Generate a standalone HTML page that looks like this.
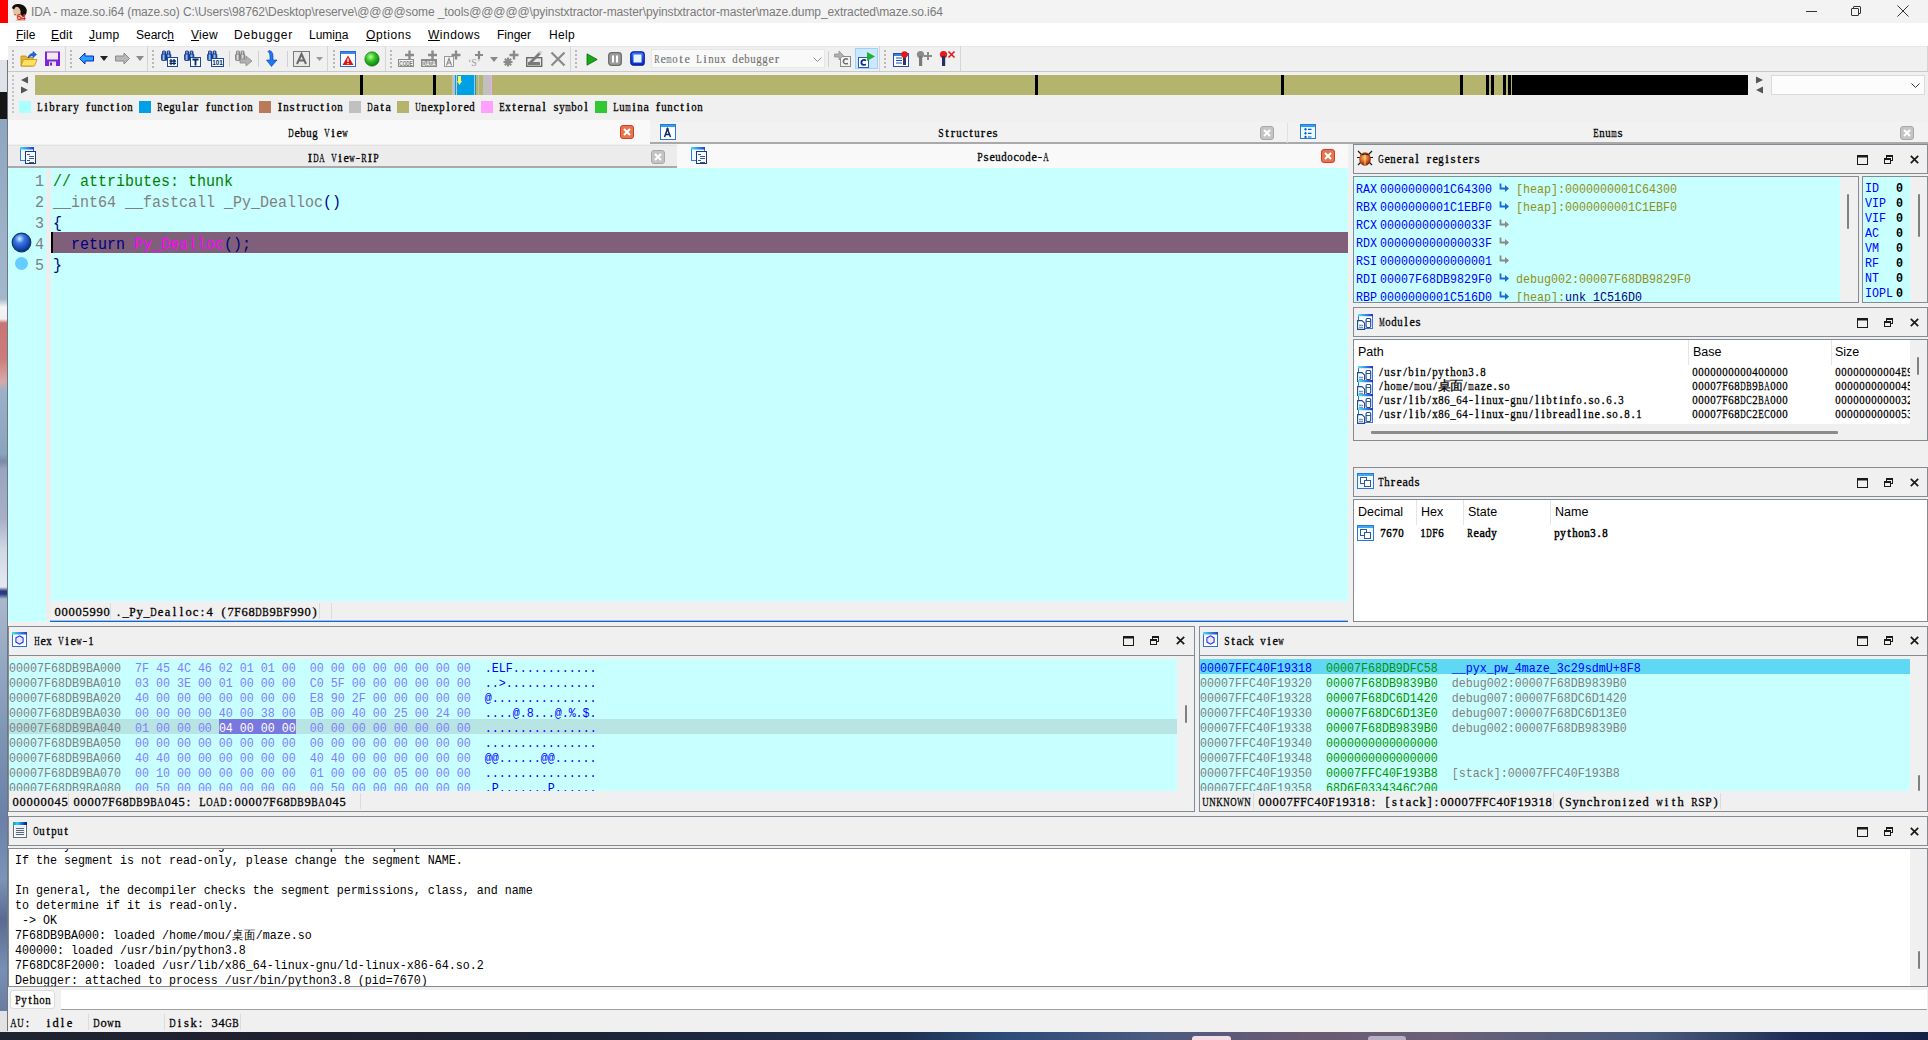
<!DOCTYPE html>
<html><head><meta charset="utf-8">
<style>
*{box-sizing:border-box}
html,body{margin:0;padding:0}
body{width:1928px;height:1040px;overflow:hidden;position:relative;background:#f0f0f0;font-family:"Liberation Sans",sans-serif;font-size:12px;color:#000}
.a{position:absolute}
.m{font-family:"Liberation Mono",monospace}
.s{font-family:"Liberation Sans",sans-serif}
.pre{white-space:pre}
.sc,.sc7{font-family:"Liberation Serif",serif;white-space:nowrap;-webkit-text-stroke:0.3px currentColor}
.sc{font-size:13px;line-height:13px;margin-top:0px}
.sc7{font-size:12.5px;line-height:13px;margin-top:1px}
.lgc{top:-1px}
.sc i,.sc7 i{display:inline-block;width:6px;text-align:center;font-style:normal}
.sc7 i{width:7px}
.sc i.w,.sc7 i.w{transform:scaleX(0.72)}

.rn{font-family:"Liberation Mono",monospace;font-size:11.67px;line-height:14px;transform:scaleY(1.17);transform-origin:0 0;color:#0000ff}
.mc{font-size:11.67px;line-height:14.2857px;transform:scaleY(1.05);transform-origin:0 0}
.lg{top:0px;font-size:11px;letter-spacing:-0.6px;line-height:13px;white-space:pre;transform:scaleY(1.15);transform-origin:0 0}
.ss{font-family:"Liberation Mono",monospace;font-size:11px;letter-spacing:-0.6px;white-space:pre;transform:scaleY(1.15);transform-origin:0 0;margin-top:1px}
</style></head><body>

<!-- desktop strip left -->
<div class="a" style="left:0;top:0;width:8px;height:23px;background:#ff0000"></div>
<div class="a" style="left:0;top:23px;width:8px;height:37px;background:#ffffff"></div>
<div class="a" style="left:0;top:60px;width:8px;height:32px;background:#dfe2e6"></div>
<div class="a" style="left:0;top:92px;width:8px;height:27px;background:#161616"></div>
<div class="a" style="left:0;top:119px;width:8px;height:892px;background:linear-gradient(#8fa6c0 0px,#a4b8cc 180px,#f4f4f4 188px,#f0f0f0 200px,#c87474 204px,#cc7c7c 240px,#d8a8a8 262px,#9cb0c8 272px,#8aa4bc 335px,#7a8aa8 342px,#9aa4c0 350px,#a8b0c8 400px,#d0d8e4 430px,#e4e8f0 468px,#2a3a80 472px,#2a3a80 475px,#a8b8cc 480px,#90a4c0 560px,#7c94b4 620px,#6a80a8 700px,#7c94b8 760px,#5a6a90 800px,#7890b4 850px,#6a7ca0 892px)"></div>
<div class="a" style="left:0;top:1011px;width:8px;height:21px;background:#e2e2e2"></div><div class="a" style="left:0;top:1032px;width:8px;height:8px;background:#4a4a4a"></div>
<div class="a" style="left:7px;top:60px;width:1px;height:971px;background:#6f7683"></div>
<!-- desktop strip bottom -->
<div class="a" style="left:0;top:1032px;width:1928px;height:8px;background:linear-gradient(90deg,#1e2430 0px,#222030 300px,#1c2438 600px,#1e3050 900px,#2c4a78 1000px,#4a5a80 1150px,#6a5a72 1300px,#6a6078 1450px,#4a5a7c 1650px,#1e2c54 1800px,#142248 1928px)"></div>

<!-- title bar -->
<div class="a" style="left:8px;top:0;width:1920px;height:23px;background:#f3f3f3"></div>
<div id="title" class="a pre" style="left:31px;top:5px;font-size:12px;letter-spacing:-0.1px;color:#7a7a7a;line-height:15px">IDA - maze.so.i64 (maze.so) C:\Users\98762\Desktop\reserve\@@@@some _tools@@@@@\pyinstxtractor-master\pyinstxtractor-master\maze.dump_extracted\maze.so.i64</div>

<!-- menu bar -->
<div class="a" style="left:8px;top:23px;width:1920px;height:23px;background:#ffffff"></div>

<!-- toolbar -->
<div class="a" style="left:8px;top:46px;width:1920px;height:26px;background:#f0f0f0;border-top:1px solid #e6e6e6;border-bottom:1px solid #c8c8c8"></div>

<!-- IDA icon -->
<svg class="a" style="left:10px;top:2px" width="18" height="19" viewBox="0 0 18 19">
<path d="M2 6Q3 1.5 9 2Q14 2.5 16 6Q17.5 8 16.5 11Q15.5 14 13 15L10 12Q8 6 4 6Z" fill="#140c08"/>
<ellipse cx="6.8" cy="9.6" rx="3.8" ry="5" transform="rotate(-12 6.8 9.6)" fill="#e2c4a4"/>
<path d="M2.2 6.5Q3.5 3.5 7 4Q5 5 4 7.5Z" fill="#140c08"/>
<ellipse cx="5" cy="12.6" rx="1" ry="0.7" fill="#b04838"/>
<path d="M5 18.5Q7 16.5 12 17Q15 17.5 16 18.5Z" fill="#c89070"/>
<text x="6.8" y="18" font-size="8.5" font-weight="bold" fill="#e02818" font-family="Liberation Sans" letter-spacing="-0.6">64</text>
</svg>
<!-- window controls -->
<div class="a" style="left:1806px;top:11px;width:11px;height:1px;background:#333"></div>
<div class="a" style="left:1853px;top:6px;width:8px;height:8px;border:1px solid #333;border-radius:1px"></div>
<div class="a" style="left:1851px;top:8px;width:8px;height:8px;border:1px solid #333;background:#f3f3f3;border-radius:1px"></div>
<svg class="a" style="left:1897px;top:5px" width="12" height="12" viewBox="0 0 12 12"><path d="M0.5 0.5L11.5 11.5M11.5 0.5L0.5 11.5" stroke="#333" stroke-width="1"/></svg>

<!-- menu -->
<div class="a" style="left:0;top:28px;line-height:15px;font-size:12px;color:#000;white-space:nowrap">
<span class="a" style="top:0;left:16px"><u>F</u>ile</span>
<span class="a" style="top:0;left:51px;letter-spacing:0.2px"><u>E</u>dit</span>
<span class="a" style="top:0;left:89px;letter-spacing:0.3px"><u>J</u>ump</span>
<span class="a" style="top:0;left:136px">Searc<u>h</u></span>
<span class="a" style="top:0;left:191px;letter-spacing:0.3px"><u>V</u>iew</span>
<span class="a" style="top:0;left:234px;letter-spacing:0.8px">Debu<u>g</u>ger</span>
<span class="a" style="top:0;left:309px">Lumi<u>n</u>a</span>
<span class="a" style="top:0;left:366px;letter-spacing:0.6px"><u>O</u>ptions</span>
<span class="a" style="top:0;left:428px;letter-spacing:0.5px"><u>W</u>indows</span>
<span class="a" style="top:0;left:497px">Finger</span>
<span class="a" style="top:0;left:549px;letter-spacing:0.3px">Help</span>
</div>

<!-- toolbar groups -->
<div class="a" style="left:65px;top:46px;width:1px;height:25px;background:#d5d5d5"></div>
<div class="a" style="left:147px;top:46px;width:1px;height:25px;background:#d5d5d5"></div>
<div class="a" style="left:327px;top:46px;width:1px;height:25px;background:#d5d5d5"></div>
<div class="a" style="left:385px;top:46px;width:1px;height:25px;background:#d5d5d5"></div>
<div class="a" style="left:570px;top:46px;width:1px;height:25px;background:#d5d5d5"></div>
<div class="a" style="left:879px;top:46px;width:1px;height:25px;background:#d5d5d5"></div>
<div class="a" style="left:960px;top:46px;width:1px;height:25px;background:#d5d5d5"></div>
<div class="a" style="left:1927px;top:46px;width:1px;height:25px;background:#d5d5d5"></div>
<!-- inner separators -->
<div class="a" style="left:229px;top:51px;width:1px;height:16px;background:#d0d0d0"></div>
<div class="a" style="left:258px;top:51px;width:1px;height:16px;background:#d0d0d0"></div>
<div class="a" style="left:287px;top:51px;width:1px;height:16px;background:#d0d0d0"></div>
<div class="a" style="left:828px;top:51px;width:1px;height:16px;background:#d0d0d0"></div>
<!-- grips -->
<svg class="a" style="left:11px;top:50px" width="4" height="18"><g fill="#b8b8b8"><rect x="1" y="0" width="2" height="2"/><rect x="1" y="4" width="2" height="2"/><rect x="1" y="8" width="2" height="2"/><rect x="1" y="12" width="2" height="2"/><rect x="1" y="16" width="2" height="2"/></g></svg>
<svg class="a" style="left:69px;top:50px" width="4" height="18"><g fill="#b8b8b8"><rect x="1" y="0" width="2" height="2"/><rect x="1" y="4" width="2" height="2"/><rect x="1" y="8" width="2" height="2"/><rect x="1" y="12" width="2" height="2"/><rect x="1" y="16" width="2" height="2"/></g></svg>
<svg class="a" style="left:151px;top:50px" width="4" height="18"><g fill="#b8b8b8"><rect x="1" y="0" width="2" height="2"/><rect x="1" y="4" width="2" height="2"/><rect x="1" y="8" width="2" height="2"/><rect x="1" y="12" width="2" height="2"/><rect x="1" y="16" width="2" height="2"/></g></svg>
<svg class="a" style="left:332px;top:50px" width="4" height="18"><g fill="#b8b8b8"><rect x="1" y="0" width="2" height="2"/><rect x="1" y="4" width="2" height="2"/><rect x="1" y="8" width="2" height="2"/><rect x="1" y="12" width="2" height="2"/><rect x="1" y="16" width="2" height="2"/></g></svg>
<svg class="a" style="left:389px;top:50px" width="4" height="18"><g fill="#b8b8b8"><rect x="1" y="0" width="2" height="2"/><rect x="1" y="4" width="2" height="2"/><rect x="1" y="8" width="2" height="2"/><rect x="1" y="12" width="2" height="2"/><rect x="1" y="16" width="2" height="2"/></g></svg>
<svg class="a" style="left:574px;top:50px" width="4" height="18"><g fill="#b8b8b8"><rect x="1" y="0" width="2" height="2"/><rect x="1" y="4" width="2" height="2"/><rect x="1" y="8" width="2" height="2"/><rect x="1" y="12" width="2" height="2"/><rect x="1" y="16" width="2" height="2"/></g></svg>
<svg class="a" style="left:883px;top:50px" width="4" height="18"><g fill="#b8b8b8"><rect x="1" y="0" width="2" height="2"/><rect x="1" y="4" width="2" height="2"/><rect x="1" y="8" width="2" height="2"/><rect x="1" y="12" width="2" height="2"/><rect x="1" y="16" width="2" height="2"/></g></svg>

<!-- open folder -->
<svg class="a" style="left:20px;top:50px" width="18" height="18" viewBox="0 0 18 18">
<path d="M1 6h5l1 1.5h6V16H1Z" fill="#e8b830" stroke="#b88a10" stroke-width="0.8"/>
<path d="M3.5 9.5H17L14.5 16H1Z" fill="#ffe060" stroke="#c09018" stroke-width="0.8"/>
<path d="M8 8 Q9 3.5 13 3.5V1.5L16.5 4.5L13 7.5V5.5Q10.5 5.5 8 8Z" fill="#1a6ee8" stroke="#0838a8" stroke-width="0.6"/>
</svg>
<!-- save -->
<svg class="a" style="left:44px;top:50px" width="17" height="17" viewBox="0 0 17 17">
<rect x="1" y="1.5" width="15" height="14.5" fill="#7a28d8"/>
<rect x="3" y="2.5" width="11" height="7" fill="#f4e8ec"/>
<rect x="5" y="11.5" width="7" height="4.5" fill="#e8e0f0"/>
<rect x="6" y="12.5" width="2" height="3" fill="#6a28c0"/>
</svg>
<!-- back arrow blue -->
<svg class="a" style="left:79px;top:52px" width="15" height="13" viewBox="0 0 15 13">
<path d="M0.5 6.5L6 1V4H14.5V9H6V12Z" fill="#2aa0ff" stroke="#0a2ad0" stroke-width="1"/>
</svg>
<svg class="a" style="left:100px;top:56px" width="8" height="5"><path d="M0 0H8L4 5Z" fill="#222"/></svg>
<!-- forward arrow gray -->
<svg class="a" style="left:115px;top:52px" width="15" height="13" viewBox="0 0 15 13">
<path d="M14.5 6.5L9 1V4H0.5V9H9V12Z" fill="#b8b8b8" stroke="#8a8a8a" stroke-width="1"/>
</svg>
<svg class="a" style="left:136px;top:56px" width="8" height="5"><path d="M0 0H8L4 5Z" fill="#8a8a8a"/></svg>
<!-- binoculars # -->
<svg class="a" style="left:161px;top:50px" width="17" height="17" viewBox="0 0 17 17">
<defs><linearGradient id="bn0" x1="0" x2="1"><stop offset="0" stop-color="#102a80"/><stop offset="0.45" stop-color="#8ac8ff"/><stop offset="1" stop-color="#102a80"/></linearGradient></defs><rect x="1.5" y="1" width="3" height="3.5" rx="0.8" fill="url(#bn0)" stroke="#102a80" stroke-width="0.8"/><rect x="6" y="1" width="3" height="3.5" rx="0.8" fill="url(#bn0)" stroke="#102a80" stroke-width="0.8"/><rect x="0.6" y="4" width="4.4" height="6.5" rx="0.8" fill="url(#bn0)" stroke="#102a80" stroke-width="0.8"/><rect x="5.4" y="4" width="4.4" height="6.5" rx="0.8" fill="url(#bn0)" stroke="#102a80" stroke-width="0.8"/>
<rect x="6.5" y="7.5" width="10" height="9" fill="#f4faff" stroke="#1a4a90"/>
<path d="M10 9v6M13 9v6M8.5 11h6.5M8.5 13.3h6.5" stroke="#0a2a60" stroke-width="1.3"/>
</svg>
<!-- binoculars T -->
<svg class="a" style="left:184px;top:50px" width="17" height="17" viewBox="0 0 17 17">
<defs><linearGradient id="bn1" x1="0" x2="1"><stop offset="0" stop-color="#102a80"/><stop offset="0.45" stop-color="#8ac8ff"/><stop offset="1" stop-color="#102a80"/></linearGradient></defs><rect x="1.5" y="1" width="3" height="3.5" rx="0.8" fill="url(#bn1)" stroke="#102a80" stroke-width="0.8"/><rect x="6" y="1" width="3" height="3.5" rx="0.8" fill="url(#bn1)" stroke="#102a80" stroke-width="0.8"/><rect x="0.6" y="4" width="4.4" height="6.5" rx="0.8" fill="url(#bn1)" stroke="#102a80" stroke-width="0.8"/><rect x="5.4" y="4" width="4.4" height="6.5" rx="0.8" fill="url(#bn1)" stroke="#102a80" stroke-width="0.8"/>
<rect x="6.5" y="7.5" width="10" height="9" fill="#f4faff" stroke="#1a4a90"/>
<path d="M8.5 9.5h6M11.5 9.5v6" stroke="#0a2a60" stroke-width="1.8"/>
</svg>
<!-- binoculars 101 -->
<svg class="a" style="left:207px;top:50px" width="17" height="17" viewBox="0 0 17 17">
<defs><linearGradient id="bn2" x1="0" x2="1"><stop offset="0" stop-color="#102a80"/><stop offset="0.45" stop-color="#8ac8ff"/><stop offset="1" stop-color="#102a80"/></linearGradient></defs><rect x="1.5" y="1" width="3" height="3.5" rx="0.8" fill="url(#bn2)" stroke="#102a80" stroke-width="0.8"/><rect x="6" y="1" width="3" height="3.5" rx="0.8" fill="url(#bn2)" stroke="#102a80" stroke-width="0.8"/><rect x="0.6" y="4" width="4.4" height="6.5" rx="0.8" fill="url(#bn2)" stroke="#102a80" stroke-width="0.8"/><rect x="5.4" y="4" width="4.4" height="6.5" rx="0.8" fill="url(#bn2)" stroke="#102a80" stroke-width="0.8"/>
<rect x="4.5" y="8.5" width="12" height="8" fill="#f4faff" stroke="#1a4a90"/>
<text x="5.3" y="15.3" font-size="6.3" font-weight="bold" fill="#0a2a60" font-family="Liberation Sans">101</text>
</svg>
<!-- binoculars arrow gray -->
<svg class="a" style="left:235px;top:50px" width="18" height="17" viewBox="0 0 18 17">
<defs><linearGradient id="bng" x1="0" x2="1"><stop offset="0" stop-color="#7a7a7a"/><stop offset="0.45" stop-color="#e0e0e0"/><stop offset="1" stop-color="#7a7a7a"/></linearGradient></defs><rect x="1.5" y="1" width="3" height="3.5" rx="0.8" fill="url(#bng)" stroke="#7a7a7a" stroke-width="0.8"/><rect x="6" y="1" width="3" height="3.5" rx="0.8" fill="url(#bng)" stroke="#7a7a7a" stroke-width="0.8"/><rect x="0.6" y="4" width="4.4" height="6.5" rx="0.8" fill="url(#bng)" stroke="#7a7a7a" stroke-width="0.8"/><rect x="5.4" y="4" width="4.4" height="6.5" rx="0.8" fill="url(#bng)" stroke="#7a7a7a" stroke-width="0.8"/>
<path d="M5 9H11V6L17 11L11 16V13H5Z" fill="#b0b0b0" stroke="#8c8c8c" stroke-width="0.8"/>
</svg>
<!-- blue down arrow -->
<svg class="a" style="left:266px;top:50px" width="13" height="17" viewBox="0 0 13 17">
<path d="M3 0.5Q7 1 7 6V10H11L5.5 16.5L0.5 10H4V6Q4 3 2 1.5Z" fill="#1a7af0" stroke="#0a3ab0" stroke-width="0.6"/>
</svg>
<!-- A box -->
<svg class="a" style="left:293px;top:51px" width="17" height="16" viewBox="0 0 17 16">
<rect x="0.5" y="0.5" width="16" height="15" fill="#eaeaea" stroke="#7a7a7a"/>
<path d="M4 13L8.5 3L13 13M5.7 9.5H11.3" stroke="#6a6a6a" stroke-width="2" fill="none"/>
</svg>
<svg class="a" style="left:316px;top:57px" width="7" height="4"><path d="M0 0H7L3.5 4Z" fill="#9a9a9a"/></svg>
<!-- red warning -->
<svg class="a" style="left:340px;top:51px" width="16" height="16" viewBox="0 0 16 16">
<rect x="0.5" y="0.5" width="15" height="15" fill="#fff" stroke="#2a6ad8"/>
<rect x="1" y="1" width="14" height="2" fill="#3a8ae8"/>
<path d="M8 4.5L13.5 14H2.5Z" fill="#d81818"/>
<path d="M8 7.5V11M8 12v1.2" stroke="#fff" stroke-width="1.3"/>
</svg>
<!-- green circle -->
<svg class="a" style="left:364px;top:51px" width="16" height="16" viewBox="0 0 16 16">
<defs><radialGradient id="gg" cx="0.4" cy="0.35" r="0.65"><stop offset="0" stop-color="#b8ff9a"/><stop offset="0.5" stop-color="#30c020"/><stop offset="1" stop-color="#108010"/></radialGradient></defs>
<circle cx="8" cy="8" r="7.2" fill="url(#gg)" stroke="#0a7010" stroke-width="0.6"/>
</svg>
<!-- CODE+ -->
<svg class="a" style="left:398px;top:50px" width="18" height="17" viewBox="0 0 18 17">
<rect x="0.5" y="9.5" width="15" height="7" fill="#f4f4f4" stroke="#8a8a8a"/>
<text x="1.3" y="15.6" font-size="6.5" font-weight="bold" fill="#7a7a7a" font-family="Liberation Sans" textLength="13.4" lengthAdjust="spacingAndGlyphs">CODE</text>
<path d="M11.5 0.5v9M7 5h9" stroke="#8a8a8a" stroke-width="2.4"/>
</svg>
<!-- DATA+ -->
<svg class="a" style="left:421px;top:50px" width="18" height="17" viewBox="0 0 18 17">
<rect x="0" y="9" width="16" height="8" fill="#8a8a8a"/>
<text x="1.3" y="15.6" font-size="6.5" font-weight="bold" fill="#f0f0f0" font-family="Liberation Sans" textLength="13.4" lengthAdjust="spacingAndGlyphs">DATA</text>
<path d="M11.5 0.5v9M7 5h9" stroke="#8a8a8a" stroke-width="2.4"/>
</svg>
<!-- A+ -->
<svg class="a" style="left:444px;top:50px" width="18" height="17" viewBox="0 0 18 17">
<rect x="0.5" y="6.5" width="9" height="10" fill="#f4f4f4" stroke="#9a9a9a"/>
<path d="M2.5 15.5L5 8.5L7.5 15.5M3.4 13H6.6" stroke="#8a8a8a" stroke-width="1.1" fill="none"/>
<path d="M12 0.5v9M7.5 5h9" stroke="#8a8a8a" stroke-width="2.4"/>
</svg>
<!-- 'S'+ -->
<svg class="a" style="left:467px;top:50px" width="18" height="17" viewBox="0 0 18 17">
<path d="M12 1v8M8 5h8" stroke="#8a8a8a" stroke-width="2.2"/>
<text x="1" y="16" font-size="10" fill="#9a9a9a" font-family="Liberation Serif">‘S’</text>
</svg>
<svg class="a" style="left:490px;top:57px" width="8" height="5"><path d="M0 0H8L4 5Z" fill="#8a8a8a"/></svg>
<!-- asterisk+ -->
<svg class="a" style="left:502px;top:50px" width="18" height="17" viewBox="0 0 18 17">
<path d="M6 7.5v9M1.5 12h9M2.8 8.8l6.4 6.4M9.2 8.8l-6.4 6.4" stroke="#8a8a8a" stroke-width="2"/>
<path d="M12 0.5v9M7.5 5h9" stroke="#8a8a8a" stroke-width="2.4"/>
</svg>
<!-- edit box -->
<svg class="a" style="left:526px;top:50px" width="17" height="17" viewBox="0 0 17 17">
<rect x="0.7" y="7.7" width="15" height="8.6" fill="#e8e8e8" stroke="#6a6a6a" stroke-width="1.4"/>
<path d="M3 14L14.5 2.5" stroke="#7a7a7a" stroke-width="2.6"/><path d="M13.5 3.5l2-2" stroke="#d0d0d0" stroke-width="2.2"/>
<path d="M3 14l3-3v3Z" fill="#6a6a6a"/><rect x="2" y="12" width="12" height="3" fill="#7a7a7a"/>
</svg>
<!-- X -->
<svg class="a" style="left:550px;top:51px" width="16" height="16" viewBox="0 0 16 16">
<path d="M1.5 1.5L14.5 14.5M14.5 1.5L1.5 14.5" stroke="#8a8a8a" stroke-width="2.2"/>
</svg>
<!-- play -->
<svg class="a" style="left:586px;top:53px" width="12" height="13" viewBox="0 0 12 13"><path d="M1 0.8L11.2 6.5L1 12.2Z" fill="#18a818" stroke="#0a6a0a" stroke-width="0.8"/></svg>
<!-- pause -->
<svg class="a" style="left:608px;top:52px" width="14" height="14" viewBox="0 0 14 14"><rect x="0.7" y="0.7" width="12.6" height="12.6" rx="2.8" fill="#9c9c9c" stroke="#6c6c6c" stroke-width="1.3"/><rect x="4" y="3.5" width="2" height="7" fill="#fff"/><rect x="8" y="3.5" width="2" height="7" fill="#fff"/></svg>
<!-- stop -->
<svg class="a" style="left:630px;top:51px" width="15" height="15" viewBox="0 0 15 15"><defs><linearGradient id="stg" x1="0" y1="0" x2="0" y2="1"><stop offset="0" stop-color="#3a7aff"/><stop offset="1" stop-color="#0828c8"/></linearGradient></defs><rect x="0.8" y="0.8" width="13.4" height="13.4" rx="2.8" fill="url(#stg)" stroke="#0a20a0" stroke-width="1.3"/><rect x="3.5" y="3.5" width="8" height="8" fill="#e8f4ff"/></svg>
<!-- combobox -->
<div class="a" style="left:651px;top:49px;width:174px;height:19px;background:#f9f9f9;border:1px solid #e6e6e6"></div>
<div class="a sc" style="left:654px;top:52px;color:#707070;-webkit-text-stroke:0.15px #707070"><i style="transform:translateX(0.30px) scaleX(0.623);transform-origin:0 0">R</i><i style="transform:translateX(0.30px) scaleX(0.936);transform-origin:0 0">e</i><i style="transform:translateX(0.30px) scaleX(0.534);transform-origin:0 0">m</i><i style="transform:translateX(0.30px) scaleX(0.831);transform-origin:0 0">o</i><i>t</i><i style="transform:translateX(0.30px) scaleX(0.936);transform-origin:0 0">e</i><i>&nbsp;</i><i style="transform:translateX(0.30px) scaleX(0.680);transform-origin:0 0">L</i><i>i</i><i style="transform:translateX(0.30px) scaleX(0.831);transform-origin:0 0">n</i><i style="transform:translateX(0.30px) scaleX(0.831);transform-origin:0 0">u</i><i style="transform:translateX(0.30px) scaleX(0.831);transform-origin:0 0">x</i><i>&nbsp;</i><i style="transform:translateX(0.30px) scaleX(0.831);transform-origin:0 0">d</i><i style="transform:translateX(0.30px) scaleX(0.936);transform-origin:0 0">e</i><i style="transform:translateX(0.30px) scaleX(0.831);transform-origin:0 0">b</i><i style="transform:translateX(0.30px) scaleX(0.831);transform-origin:0 0">u</i><i style="transform:translateX(0.30px) scaleX(0.831);transform-origin:0 0">g</i><i style="transform:translateX(0.30px) scaleX(0.831);transform-origin:0 0">g</i><i style="transform:translateX(0.30px) scaleX(0.936);transform-origin:0 0">e</i><i>r</i></div>
<svg class="a" style="left:813px;top:57px" width="9" height="5"><path d="M0.5 0.5L4.5 4.5L8.5 0.5" stroke="#8a8a8a" fill="none"/></svg>
<!-- arrow C -->
<svg class="a" style="left:834px;top:50px" width="18" height="17" viewBox="0 0 18 17">
<rect x="6.5" y="6.5" width="10" height="10" fill="#f4f4f4" stroke="#8a8a8a"/>
<path d="M14 9.5Q12.5 8.5 11 9Q9 10 9.5 12.5Q10.5 14.5 14 13.5" stroke="#6a6a6a" stroke-width="1.5" fill="none"/>
<path d="M0.5 4H5V1L9.5 5.5L5 10V7H0.5Z" fill="#b0b0b0" stroke="#8a8a8a" stroke-width="0.7"/>
</svg>
<!-- active C play -->
<div class="a" style="left:855px;top:48px;width:23px;height:21px;background:#cce8ff;border:1px solid #99d1ff"></div>
<svg class="a" style="left:858px;top:51px" width="18" height="17" viewBox="0 0 18 17">
<rect x="0.5" y="6.5" width="10" height="10" fill="#fff" stroke="#2060c0"/>
<path d="M8 9.5Q6.5 8.5 5 9Q3 10 3.5 12.5Q4.5 14.5 8 13.5" stroke="#0a2a90" stroke-width="1.8" fill="none"/>
<path d="M9 1L17 5.5L9 10Z" fill="#20b030"/>
</svg>
<!-- module pin -->
<svg class="a" style="left:893px;top:50px" width="17" height="17" viewBox="0 0 17 17">
<rect x="0.5" y="3.5" width="15" height="13" fill="#fff" stroke="#2050c0"/>
<rect x="1" y="4" width="14" height="2" fill="#3a80e0"/>
<path d="M3 8h6M3 10.5h6M3 13h6" stroke="#2050c0" stroke-width="1"/>
<rect x="10" y="7" width="3" height="8" fill="#303a60"/>
<circle cx="11.5" cy="4.5" r="3.2" fill="#e81818"/>
</svg>
<!-- gray pin plus -->
<svg class="a" style="left:916px;top:50px" width="17" height="17" viewBox="0 0 17 17">
<circle cx="4.5" cy="4.5" r="3.6" fill="#8a8a8a"/>
<rect x="3" y="6" width="3.2" height="10" fill="#7a7a7a"/>
<path d="M12 2v8M8 6h8" stroke="#8a8a8a" stroke-width="2"/>
</svg>
<!-- red pin X -->
<svg class="a" style="left:939px;top:50px" width="17" height="17" viewBox="0 0 17 17">
<circle cx="4.5" cy="4.5" r="3.6" fill="#e81818"/>
<rect x="3" y="6" width="3.2" height="10" fill="#282e60"/>
<path d="M9.5 1.5l6 6M15.5 1.5l-6 6" stroke="#e81818" stroke-width="1.6"/>
</svg>

<!-- nav band -->
<svg class="a" style="left:11px;top:74px" width="4" height="44"><g fill="#c4c4c4"><rect x="1" y="1" width="2" height="2"/><rect x="1" y="5" width="2" height="2"/><rect x="1" y="9" width="2" height="2"/><rect x="1" y="13" width="2" height="2"/><rect x="1" y="17" width="2" height="2"/><rect x="1" y="21" width="2" height="2"/><rect x="1" y="25" width="2" height="2"/><rect x="1" y="29" width="2" height="2"/><rect x="1" y="33" width="2" height="2"/><rect x="1" y="37" width="2" height="2"/></g></svg>
<svg class="a" style="left:20px;top:76px" width="9" height="19"><path d="M8 0.5V7.5L1 4Z" fill="#555"/><path d="M1 10.5V17.5L8 14Z" fill="#555"/></svg>
<div class="a" style="left:35px;top:75px;width:1713px;height:20px;background:#b4b46c"></div>
<div class="a" style="left:360px;top:75px;width:3px;height:20px;background:#000"></div>
<div class="a" style="left:433px;top:75px;width:3px;height:20px;background:#000"></div>
<div class="a" style="left:452px;top:75px;width:3px;height:20px;background:#c0c0c0"></div>
<div class="a" style="left:455px;top:75px;width:1px;height:20px;background:#00a0e6"></div>
<div class="a" style="left:456px;top:75px;width:1px;height:20px;background:#c8c8c0"></div>
<div class="a" style="left:457px;top:75px;width:17px;height:20px;background:#00a0e6"></div>
<div class="a" style="left:474px;top:75px;width:1px;height:20px;background:#c0c0c0"></div>
<div class="a" style="left:475px;top:75px;width:1px;height:20px;background:#00a0e6"></div>
<div class="a" style="left:478px;top:75px;width:1px;height:20px;background:#c0c0c0"></div>
<div class="a" style="left:483px;top:75px;width:8px;height:20px;background:#c0c0c0"></div>
<div class="a" style="left:491px;top:75px;width:1px;height:20px;background:#ffa0ff"></div>
<svg class="a" style="left:457px;top:76px" width="5" height="9"><path d="M1 0H4V5H5L2.5 9L0 5H1Z" fill="#ffff60"/></svg>
<div class="a" style="left:1035px;top:75px;width:3px;height:20px;background:#000"></div>
<div class="a" style="left:1281px;top:75px;width:3px;height:20px;background:#000"></div>
<div class="a" style="left:1460px;top:75px;width:3px;height:20px;background:#000"></div>
<div class="a" style="left:1486px;top:75px;width:3px;height:20px;background:#000"></div>
<div class="a" style="left:1491px;top:75px;width:3px;height:20px;background:#000"></div>
<div class="a" style="left:1503px;top:75px;width:3px;height:20px;background:#000"></div>
<div class="a" style="left:1508px;top:75px;width:3px;height:20px;background:#000"></div>
<div class="a" style="left:1512px;top:75px;width:236px;height:20px;background:#000"></div>
<svg class="a" style="left:1755px;top:76px" width="9" height="19"><path d="M1 0.5V7.5L8 4Z" fill="#555"/><path d="M8 10.5V17.5L1 14Z" fill="#555"/></svg>
<div class="a" style="left:1771px;top:75px;width:154px;height:20px;background:#fcfcfc;border:1px solid #dadada"></div>
<svg class="a" style="left:1911px;top:83px" width="9" height="5"><path d="M0.5 0.5L4.5 4.5L8.5 0.5" stroke="#333" fill="none"/></svg>

<!-- legend -->
<div class="a" style="left:0;top:101px;white-space:nowrap">
<div class="a" style="left:19px;top:0;width:12px;height:12px;background:#aaffff"></div>
<div class="a" style="left:139px;top:0;width:12px;height:12px;background:#00a0e6"></div>
<div class="a" style="left:259px;top:0;width:12px;height:12px;background:#b87a58"></div>
<div class="a" style="left:349px;top:0;width:12px;height:12px;background:#c0c0c0"></div>
<div class="a" style="left:397px;top:0;width:12px;height:12px;background:#b4b46c"></div>
<div class="a" style="left:481px;top:0;width:12px;height:12px;background:#ffa0ff"></div>
<div class="a" style="left:595px;top:0;width:12px;height:12px;background:#32c832"></div>
<div class="a sc lgc" style="left:37px"><i style="transform:translateX(0.30px) scaleX(0.680);transform-origin:0 0">L</i><i>i</i><i style="transform:translateX(0.30px) scaleX(0.831);transform-origin:0 0">b</i><i>r</i><i style="transform:translateX(0.30px) scaleX(0.936);transform-origin:0 0">a</i><i>r</i><i style="transform:translateX(0.30px) scaleX(0.831);transform-origin:0 0">y</i><i>&nbsp;</i><i>f</i><i style="transform:translateX(0.30px) scaleX(0.831);transform-origin:0 0">u</i><i style="transform:translateX(0.30px) scaleX(0.831);transform-origin:0 0">n</i><i style="transform:translateX(0.30px) scaleX(0.936);transform-origin:0 0">c</i><i>t</i><i>i</i><i style="transform:translateX(0.30px) scaleX(0.831);transform-origin:0 0">o</i><i style="transform:translateX(0.30px) scaleX(0.831);transform-origin:0 0">n</i></div>
<div class="a sc lgc" style="left:157px"><i style="transform:translateX(0.30px) scaleX(0.623);transform-origin:0 0">R</i><i style="transform:translateX(0.30px) scaleX(0.936);transform-origin:0 0">e</i><i style="transform:translateX(0.30px) scaleX(0.831);transform-origin:0 0">g</i><i style="transform:translateX(0.30px) scaleX(0.831);transform-origin:0 0">u</i><i>l</i><i style="transform:translateX(0.30px) scaleX(0.936);transform-origin:0 0">a</i><i>r</i><i>&nbsp;</i><i>f</i><i style="transform:translateX(0.30px) scaleX(0.831);transform-origin:0 0">u</i><i style="transform:translateX(0.30px) scaleX(0.831);transform-origin:0 0">n</i><i style="transform:translateX(0.30px) scaleX(0.936);transform-origin:0 0">c</i><i>t</i><i>i</i><i style="transform:translateX(0.30px) scaleX(0.831);transform-origin:0 0">o</i><i style="transform:translateX(0.30px) scaleX(0.831);transform-origin:0 0">n</i></div>
<div class="a sc lgc" style="left:277px"><i>I</i><i style="transform:translateX(0.30px) scaleX(0.831);transform-origin:0 0">n</i><i>s</i><i>t</i><i>r</i><i style="transform:translateX(0.30px) scaleX(0.831);transform-origin:0 0">u</i><i style="transform:translateX(0.30px) scaleX(0.936);transform-origin:0 0">c</i><i>t</i><i>i</i><i style="transform:translateX(0.30px) scaleX(0.831);transform-origin:0 0">o</i><i style="transform:translateX(0.30px) scaleX(0.831);transform-origin:0 0">n</i></div>
<div class="a sc lgc" style="left:367px"><i style="transform:translateX(0.30px) scaleX(0.575);transform-origin:0 0">D</i><i style="transform:translateX(0.30px) scaleX(0.936);transform-origin:0 0">a</i><i>t</i><i style="transform:translateX(0.30px) scaleX(0.936);transform-origin:0 0">a</i></div>
<div class="a sc lgc" style="left:415px"><i style="transform:translateX(0.30px) scaleX(0.575);transform-origin:0 0">U</i><i style="transform:translateX(0.30px) scaleX(0.831);transform-origin:0 0">n</i><i style="transform:translateX(0.30px) scaleX(0.936);transform-origin:0 0">e</i><i style="transform:translateX(0.30px) scaleX(0.831);transform-origin:0 0">x</i><i style="transform:translateX(0.30px) scaleX(0.831);transform-origin:0 0">p</i><i>l</i><i style="transform:translateX(0.30px) scaleX(0.831);transform-origin:0 0">o</i><i>r</i><i style="transform:translateX(0.30px) scaleX(0.936);transform-origin:0 0">e</i><i style="transform:translateX(0.30px) scaleX(0.831);transform-origin:0 0">d</i></div>
<div class="a sc lgc" style="left:499px"><i style="transform:translateX(0.30px) scaleX(0.680);transform-origin:0 0">E</i><i style="transform:translateX(0.30px) scaleX(0.831);transform-origin:0 0">x</i><i>t</i><i style="transform:translateX(0.30px) scaleX(0.936);transform-origin:0 0">e</i><i>r</i><i style="transform:translateX(0.30px) scaleX(0.831);transform-origin:0 0">n</i><i style="transform:translateX(0.30px) scaleX(0.936);transform-origin:0 0">a</i><i>l</i><i>&nbsp;</i><i>s</i><i style="transform:translateX(0.30px) scaleX(0.831);transform-origin:0 0">y</i><i style="transform:translateX(0.30px) scaleX(0.534);transform-origin:0 0">m</i><i style="transform:translateX(0.30px) scaleX(0.831);transform-origin:0 0">b</i><i style="transform:translateX(0.30px) scaleX(0.831);transform-origin:0 0">o</i><i>l</i></div>
<div class="a sc lgc" style="left:613px"><i style="transform:translateX(0.30px) scaleX(0.680);transform-origin:0 0">L</i><i style="transform:translateX(0.30px) scaleX(0.831);transform-origin:0 0">u</i><i style="transform:translateX(0.30px) scaleX(0.534);transform-origin:0 0">m</i><i>i</i><i style="transform:translateX(0.30px) scaleX(0.831);transform-origin:0 0">n</i><i style="transform:translateX(0.30px) scaleX(0.936);transform-origin:0 0">a</i><i>&nbsp;</i><i>f</i><i style="transform:translateX(0.30px) scaleX(0.831);transform-origin:0 0">u</i><i style="transform:translateX(0.30px) scaleX(0.831);transform-origin:0 0">n</i><i style="transform:translateX(0.30px) scaleX(0.936);transform-origin:0 0">c</i><i>t</i><i>i</i><i style="transform:translateX(0.30px) scaleX(0.831);transform-origin:0 0">o</i><i style="transform:translateX(0.30px) scaleX(0.831);transform-origin:0 0">n</i></div>
</div>

<!-- tab row 1 -->
<div class="a" style="left:8px;top:120px;width:642px;height:24px;background:#f9f9f9"></div>
<div class="a" style="left:650px;top:122px;width:1278px;height:22px;background:#f2f2f2;border-bottom:2px solid #a9a9a9"></div>
<div class="a" style="left:1287px;top:123px;width:1px;height:20px;background:#e0e0e0"></div>
<div class="a sc" style="left:288px;top:126px"><i style="transform:translateX(0.30px) scaleX(0.575);transform-origin:0 0">D</i><i style="transform:translateX(0.30px) scaleX(0.936);transform-origin:0 0">e</i><i style="transform:translateX(0.30px) scaleX(0.831);transform-origin:0 0">b</i><i style="transform:translateX(0.30px) scaleX(0.831);transform-origin:0 0">u</i><i style="transform:translateX(0.30px) scaleX(0.831);transform-origin:0 0">g</i><i>&nbsp;</i><i style="transform:translateX(0.30px) scaleX(0.575);transform-origin:0 0">V</i><i>i</i><i style="transform:translateX(0.30px) scaleX(0.936);transform-origin:0 0">e</i><i style="transform:translateX(0.30px) scaleX(0.575);transform-origin:0 0">w</i></div>
<div class="a sc" style="left:938px;top:126px"><i style="transform:translateX(0.30px) scaleX(0.747);transform-origin:0 0">S</i><i>t</i><i>r</i><i style="transform:translateX(0.30px) scaleX(0.831);transform-origin:0 0">u</i><i style="transform:translateX(0.30px) scaleX(0.936);transform-origin:0 0">c</i><i>t</i><i style="transform:translateX(0.30px) scaleX(0.831);transform-origin:0 0">u</i><i>r</i><i style="transform:translateX(0.30px) scaleX(0.936);transform-origin:0 0">e</i><i>s</i></div>
<div class="a sc" style="left:1593px;top:126px"><i style="transform:translateX(0.30px) scaleX(0.680);transform-origin:0 0">E</i><i style="transform:translateX(0.30px) scaleX(0.831);transform-origin:0 0">n</i><i style="transform:translateX(0.30px) scaleX(0.831);transform-origin:0 0">u</i><i style="transform:translateX(0.30px) scaleX(0.534);transform-origin:0 0">m</i><i>s</i></div>
<svg class="a" style="left:620px;top:125px" width="14" height="14" viewBox="0 0 14 14"><rect x="0.5" y="0.5" width="13" height="13" rx="2.5" fill="#e07850" stroke="#d83828"/><path d="M4 4L10 10M10 4L4 10" stroke="#fff" stroke-width="2"/></svg>
<svg class="a gx" style="left:1260px;top:126px" width="14" height="14" viewBox="0 0 14 14"><rect x="0.5" y="0.5" width="13" height="13" rx="2.5" fill="#c4c4c4" stroke="#a8a8a8"/><path d="M4 4L10 10M10 4L4 10" stroke="#fff" stroke-width="2"/></svg>
<svg class="a gx" style="left:1900px;top:126px" width="14" height="14" viewBox="0 0 14 14"><rect x="0.5" y="0.5" width="13" height="13" rx="2.5" fill="#c4c4c4" stroke="#a8a8a8"/><path d="M4 4L10 10M10 4L4 10" stroke="#fff" stroke-width="2"/></svg>
<!-- structures icon -->
<svg class="a" style="left:660px;top:124px" width="16" height="16" viewBox="0 0 16 16"><rect x="0.5" y="0.5" width="15" height="15" fill="#fff" stroke="#2a78e0"/><rect x="1" y="1" width="14" height="2" fill="#2aa0f0"/><path d="M4.5 13L7.5 5L10.5 13M6 10.5h3" stroke="#102a60" stroke-width="1.5" fill="none"/><rect x="6.5" y="4" width="2" height="2" fill="#102a60"/></svg>
<!-- enums icon -->
<svg class="a" style="left:1300px;top:124px" width="16" height="15" viewBox="0 0 16 15"><rect x="0.5" y="0.5" width="15" height="14" fill="#eefaff" stroke="#2a78e0"/><rect x="1" y="1" width="14" height="2" fill="#2aa0f0"/><g fill="#0060d0"><path d="M5.5 3.8l1.5 1.5-1.5 1.5-1.5-1.5Z"/><path d="M5.5 7.8l1.5 1.5-1.5 1.5-1.5-1.5Z"/><path d="M5.5 11.6l1.5 1.5-1.5 1.5-1.5-1.5Z"/></g><path d="M8 5.3h3.5M8 9.3h3.5M8 13h3.5" stroke="#0060d0" stroke-width="1.2"/></svg>

<!-- tab row 2 -->
<div class="a" style="left:8px;top:145px;width:669px;height:1px;background:#e3e3e3"></div>
<div class="a" style="left:8px;top:146px;width:669px;height:22px;background:#ececec;border-bottom:2px solid #a9a9a9"></div>
<div class="a" style="left:677px;top:144px;width:671px;height:24px;background:#f9f9f9"></div>
<div class="a sc" style="left:307px;top:151px"><i>I</i><i style="transform:translateX(0.30px) scaleX(0.575);transform-origin:0 0">D</i><i style="transform:translateX(0.30px) scaleX(0.575);transform-origin:0 0">A</i><i>&nbsp;</i><i style="transform:translateX(0.30px) scaleX(0.575);transform-origin:0 0">V</i><i>i</i><i style="transform:translateX(0.30px) scaleX(0.936);transform-origin:0 0">e</i><i style="transform:translateX(0.30px) scaleX(0.575);transform-origin:0 0">w</i><i>-</i><i style="transform:translateX(0.30px) scaleX(0.623);transform-origin:0 0">R</i><i>I</i><i style="transform:translateX(0.30px) scaleX(0.747);transform-origin:0 0">P</i></div>
<div class="a sc" style="left:977px;top:150px"><i style="transform:translateX(0.30px) scaleX(0.747);transform-origin:0 0">P</i><i>s</i><i style="transform:translateX(0.30px) scaleX(0.936);transform-origin:0 0">e</i><i style="transform:translateX(0.30px) scaleX(0.831);transform-origin:0 0">u</i><i style="transform:translateX(0.30px) scaleX(0.831);transform-origin:0 0">d</i><i style="transform:translateX(0.30px) scaleX(0.831);transform-origin:0 0">o</i><i style="transform:translateX(0.30px) scaleX(0.936);transform-origin:0 0">c</i><i style="transform:translateX(0.30px) scaleX(0.831);transform-origin:0 0">o</i><i style="transform:translateX(0.30px) scaleX(0.831);transform-origin:0 0">d</i><i style="transform:translateX(0.30px) scaleX(0.936);transform-origin:0 0">e</i><i>-</i><i style="transform:translateX(0.30px) scaleX(0.575);transform-origin:0 0">A</i></div>
<svg class="a gx" style="left:651px;top:150px" width="14" height="14" viewBox="0 0 14 14"><rect x="0.5" y="0.5" width="13" height="13" rx="2.5" fill="#c4c4c4" stroke="#a8a8a8"/><path d="M4 4L10 10M10 4L4 10" stroke="#fff" stroke-width="2"/></svg>
<svg class="a" style="left:1321px;top:149px" width="14" height="14" viewBox="0 0 14 14"><rect x="0.5" y="0.5" width="13" height="13" rx="2.5" fill="#e07850" stroke="#d83828"/><path d="M4 4L10 10M10 4L4 10" stroke="#fff" stroke-width="2"/></svg>
<!-- doc icons -->
<svg class="a" style="left:20px;top:147px" width="17" height="17" viewBox="0 0 17 17"><defs><linearGradient id="dtb" x1="0" x2="1"><stop offset="0" stop-color="#40e0ff"/><stop offset="1" stop-color="#2040d0"/></linearGradient></defs><rect x="0.5" y="0.5" width="13" height="13" fill="#f0f8ff" stroke="#2a80e8"/><rect x="0" y="0" width="14" height="2.5" fill="url(#dtb)"/><rect x="5.5" y="4.5" width="10" height="12" fill="#f4f8ff" stroke="#1a3a78"/><path d="M7 7.5h3M9 9.5h5M9 11.5h5M7 13.5h3M9 15.5h5" stroke="#3a5a90" stroke-width="1"/></svg>
<svg class="a" style="left:691px;top:147px" width="17" height="17" viewBox="0 0 17 17"><defs><linearGradient id="dtb" x1="0" x2="1"><stop offset="0" stop-color="#40e0ff"/><stop offset="1" stop-color="#2040d0"/></linearGradient></defs><rect x="0.5" y="0.5" width="13" height="13" fill="#f0f8ff" stroke="#2a80e8"/><rect x="0" y="0" width="14" height="2.5" fill="url(#dtb)"/><rect x="5.5" y="4.5" width="10" height="12" fill="#f4f8ff" stroke="#1a3a78"/><path d="M7 7.5h3M9 9.5h5M9 11.5h5M7 13.5h3M9 15.5h5" stroke="#3a5a90" stroke-width="1"/></svg>

<!-- pseudocode panel -->
<div class="a" style="left:8px;top:168px;width:1340px;height:433px;background:#c8ffff"></div>
<div class="a" style="left:8px;top:168px;width:38px;height:454px;background:#c8ffff"></div>
<div class="a" style="left:46px;top:168px;width:5px;height:454px;background:#ededed"></div>
<div class="a" style="left:51px;top:232px;width:1297px;height:21px;background:#7f5f7a"></div>
<div class="a" style="left:51px;top:232px;width:2px;height:21px;background:#000"></div>
<div class="a m pre" style="left:0;top:172px;width:44px;text-align:right;font-size:15px;line-height:18.26px;transform:scaleY(1.15);transform-origin:0 0;color:#808080">1
2
3
4
5</div>
<div class="a m pre" style="left:53px;top:172px;font-size:15px;line-height:18.26px;transform:scaleY(1.15);transform-origin:0 0;color:#000080"><span style="color:#008000">// attributes: thunk</span>
<span style="color:#808080">__int64 __fastcall _Py_Dealloc</span>()
{
  return <span style="color:#ff00ff">Py_Dealloc</span>();
}</div>
<svg class="a" style="left:11px;top:232px" width="21" height="21" viewBox="0 0 21 21"><defs><radialGradient id="bb" cx="0.4" cy="0.3" r="0.7"><stop offset="0" stop-color="#d8ecff"/><stop offset="0.35" stop-color="#3a7ae8"/><stop offset="1" stop-color="#0a2a90"/></radialGradient></defs><circle cx="10.5" cy="10.5" r="9.3" fill="url(#bb)" stroke="#0a3a60" stroke-width="1.2"/></svg>
<div class="a" style="left:15px;top:257px;width:13px;height:13px;border-radius:50%;background:#64ccff"></div>
<!-- pseudocode status -->
<div class="a" style="left:51px;top:601px;width:1297px;height:21px;background:#f0f0f0"></div>
<div class="a" style="left:50px;top:620px;width:1298px;height:2px;background:linear-gradient(#9cc0ec 50%,#1a64c8 50%)"></div>
<div class="a" style="left:319px;top:603px;width:1px;height:16px;background:#dcdcdc"></div>
<div class="a" style="left:110px;top:603px;width:1px;height:16px;background:#dcdcdc"></div>
<div class="a" style="left:331px;top:603px;width:1px;height:16px;background:#dcdcdc"></div>
<div class="a sc7" style="left:54px;top:605px"><i>0</i><i>0</i><i>0</i><i>0</i><i>5</i><i>9</i><i>9</i><i>0</i></div>
<div class="a sc7" style="left:115px;top:605px"><i>.</i><i>_</i><i style="transform:translateX(0.30px) scaleX(0.921);transform-origin:0 0">P</i><i>y</i><i>_</i><i style="transform:translateX(0.30px) scaleX(0.709);transform-origin:0 0">D</i><i>e</i><i>a</i><i>l</i><i>l</i><i>o</i><i>c</i><i>:</i><i>4</i><i>&nbsp;</i><i>(</i><i>7</i><i style="transform:translateX(0.30px) scaleX(0.921);transform-origin:0 0">F</i><i>6</i><i>8</i><i style="transform:translateX(0.30px) scaleX(0.709);transform-origin:0 0">D</i><i style="transform:translateX(0.30px) scaleX(0.768);transform-origin:0 0">B</i><i>9</i><i style="transform:translateX(0.30px) scaleX(0.768);transform-origin:0 0">B</i><i style="transform:translateX(0.30px) scaleX(0.921);transform-origin:0 0">F</i><i>9</i><i>9</i><i>0</i><i>)</i></div>
<div class="a" style="left:1348px;top:144px;width:5px;height:478px;background:#f0f0f0"></div>

<!-- RIGHT PANELS -->
<div class="a" style="left:1353px;top:144px;width:575px;height:30px;background:#f0f0f0;border:1px solid #858b93"></div>
<svg class="a" style="left:1356px;top:149px" width="18" height="18" viewBox="0 0 18 18"><defs><radialGradient id="bug" cx="0.45" cy="0.4" r="0.6"><stop offset="0" stop-color="#ffc070"/><stop offset="0.6" stop-color="#d06018"/><stop offset="1" stop-color="#801808"/></radialGradient></defs><path d="M2 2l4 4M16 2l-4 4M1 8.5h3M17 8.5h-3M2 16l3-3M16 16l-3-3" stroke="#1a1a1a" stroke-width="1.2"/><ellipse cx="9" cy="10" rx="5.8" ry="6.8" fill="url(#bug)"/><path d="M3.8 6.5Q9 2 14.2 6.5Q9 5 3.8 6.5Z" fill="#3a1a08"/><path d="M9 5.5V16.5" stroke="#f0d0a0" stroke-width="0.9"/></svg>
<div class="a sc" style="left:1378px;top:152px"><i style="transform:translateX(0.30px) scaleX(0.575);transform-origin:0 0">G</i><i style="transform:translateX(0.30px) scaleX(0.936);transform-origin:0 0">e</i><i style="transform:translateX(0.30px) scaleX(0.831);transform-origin:0 0">n</i><i style="transform:translateX(0.30px) scaleX(0.936);transform-origin:0 0">e</i><i>r</i><i style="transform:translateX(0.30px) scaleX(0.936);transform-origin:0 0">a</i><i>l</i><i>&nbsp;</i><i>r</i><i style="transform:translateX(0.30px) scaleX(0.936);transform-origin:0 0">e</i><i style="transform:translateX(0.30px) scaleX(0.831);transform-origin:0 0">g</i><i>i</i><i>s</i><i>t</i><i style="transform:translateX(0.30px) scaleX(0.936);transform-origin:0 0">e</i><i>r</i><i>s</i></div>
<svg class="a" style="left:1857px;top:155px" width="11" height="10" viewBox="0 0 11 10"><rect x="0.5" y="0.5" width="10" height="9" fill="none" stroke="#1a1a1a"/><rect x="0.5" y="0.5" width="10" height="2" fill="#1a1a1a"/></svg>
<svg class="a" style="left:1884px;top:155px" width="9" height="9" viewBox="0 0 9 9"><rect x="2.5" y="0.5" width="6" height="5" fill="none" stroke="#1a1a1a"/><rect x="2.5" y="0.5" width="6" height="1.5" fill="#1a1a1a"/><rect x="0.5" y="3.5" width="6" height="5" fill="#f0f0f0" stroke="#1a1a1a"/><rect x="0.5" y="3.5" width="6" height="1.5" fill="#1a1a1a"/></svg>
<svg class="a" style="left:1910px;top:155px" width="9" height="9" viewBox="0 0 9 9"><path d="M0.8 0.8L8.2 8.2M8.2 0.8L0.8 8.2" stroke="#1a1a1a" stroke-width="1.7"/></svg>
<div class="a" style="left:1353px;top:176px;width:506px;height:127px;background:#c8ffff;border:1px solid #858b93"></div>
<div class="a" style="left:1840px;top:177px;width:18px;height:125px;background:#f0f0f0"></div>
<div class="a" style="left:1847px;top:194px;width:2px;height:35px;background:#808080;border-radius:1px"></div>
<div class="a" style="left:1862px;top:176px;width:66px;height:127px;background:#c8ffff;border:1px solid #858b93"></div>
<div class="a" style="left:1910px;top:177px;width:17px;height:125px;background:#f0f0f0"></div>
<div class="a" style="left:1918px;top:194px;width:2px;height:43px;background:#808080;border-radius:1px"></div>
<div class="a" style="left:1354px;top:177px;width:486px;height:125px;overflow:hidden">
<div class="a rn" style="left:2px;top:4px">RAX</div>
<div class="a m pre" style="left:26px;top:4px;font-size:11.67px;line-height:14px;transform:scaleY(1.17);transform-origin:0 0;color:#0000ff">0000000001C64300</div>
<svg class="a" style="left:145px;top:6px" width="11" height="10" viewBox="0 0 11 10"><path d="M1.5 0.5V5.5H6" stroke="#1a6ad0" stroke-width="1.8" fill="none"/><path d="M6 2L10 5.5L6 9Z" fill="#1a6ad0"/></svg>
<div class="a m pre" style="left:162px;top:4px;font-size:11.67px;line-height:14px;transform:scaleY(1.17);transform-origin:0 0;color:#909018">[heap]:0000000001C64300</div>
<div class="a rn" style="left:2px;top:22px">RBX</div>
<div class="a m pre" style="left:26px;top:22px;font-size:11.67px;line-height:14px;transform:scaleY(1.17);transform-origin:0 0;color:#0000ff">0000000001C1EBF0</div>
<svg class="a" style="left:145px;top:24px" width="11" height="10" viewBox="0 0 11 10"><path d="M1.5 0.5V5.5H6" stroke="#1a6ad0" stroke-width="1.8" fill="none"/><path d="M6 2L10 5.5L6 9Z" fill="#1a6ad0"/></svg>
<div class="a m pre" style="left:162px;top:22px;font-size:11.67px;line-height:14px;transform:scaleY(1.17);transform-origin:0 0;color:#909018">[heap]:0000000001C1EBF0</div>
<div class="a rn" style="left:2px;top:40px">RCX</div>
<div class="a m pre" style="left:26px;top:40px;font-size:11.67px;line-height:14px;transform:scaleY(1.17);transform-origin:0 0;color:#0000ff">000000000000033F</div>
<svg class="a" style="left:145px;top:42px" width="11" height="10" viewBox="0 0 11 10"><path d="M1.5 0.5V5.5H6" stroke="#8a8a8a" stroke-width="1.8" fill="none"/><path d="M6 2L10 5.5L6 9Z" fill="#8a8a8a"/></svg>
<div class="a rn" style="left:2px;top:58px">RDX</div>
<div class="a m pre" style="left:26px;top:58px;font-size:11.67px;line-height:14px;transform:scaleY(1.17);transform-origin:0 0;color:#0000ff">000000000000033F</div>
<svg class="a" style="left:145px;top:60px" width="11" height="10" viewBox="0 0 11 10"><path d="M1.5 0.5V5.5H6" stroke="#8a8a8a" stroke-width="1.8" fill="none"/><path d="M6 2L10 5.5L6 9Z" fill="#8a8a8a"/></svg>
<div class="a rn" style="left:2px;top:76px">RSI</div>
<div class="a m pre" style="left:26px;top:76px;font-size:11.67px;line-height:14px;transform:scaleY(1.17);transform-origin:0 0;color:#0000ff">0000000000000001</div>
<svg class="a" style="left:145px;top:78px" width="11" height="10" viewBox="0 0 11 10"><path d="M1.5 0.5V5.5H6" stroke="#8a8a8a" stroke-width="1.8" fill="none"/><path d="M6 2L10 5.5L6 9Z" fill="#8a8a8a"/></svg>
<div class="a rn" style="left:2px;top:94px">RDI</div>
<div class="a m pre" style="left:26px;top:94px;font-size:11.67px;line-height:14px;transform:scaleY(1.17);transform-origin:0 0;color:#0000ff">00007F68DB9829F0</div>
<svg class="a" style="left:145px;top:96px" width="11" height="10" viewBox="0 0 11 10"><path d="M1.5 0.5V5.5H6" stroke="#1a6ad0" stroke-width="1.8" fill="none"/><path d="M6 2L10 5.5L6 9Z" fill="#1a6ad0"/></svg>
<div class="a m pre" style="left:162px;top:94px;font-size:11.67px;line-height:14px;transform:scaleY(1.17);transform-origin:0 0;color:#909018">debug002:00007F68DB9829F0</div>
<div class="a rn" style="left:2px;top:112px">RBP</div>
<div class="a m pre" style="left:26px;top:112px;font-size:11.67px;line-height:14px;transform:scaleY(1.17);transform-origin:0 0;color:#0000ff">0000000001C516D0</div>
<svg class="a" style="left:145px;top:114px" width="11" height="10" viewBox="0 0 11 10"><path d="M1.5 0.5V5.5H6" stroke="#1a6ad0" stroke-width="1.8" fill="none"/><path d="M6 2L10 5.5L6 9Z" fill="#1a6ad0"/></svg>
<div class="a m pre" style="left:162px;top:112px;font-size:11.67px;line-height:14px;transform:scaleY(1.17);transform-origin:0 0;color:#909018">[heap]:<span style="color:#000080">unk 1C516D0</span></div>
</div>
<div class="a" style="left:1863px;top:177px;width:47px;height:125px;overflow:hidden">
<div class="a rn" style="left:2px;top:3px">ID</div>
<div class="a m" style="left:33px;top:3px;font-size:11.67px;line-height:14px;transform:scaleY(1.17);transform-origin:0 0;color:#000;font-weight:bold">0</div>
<div class="a rn" style="left:2px;top:18px">VIP</div>
<div class="a m" style="left:33px;top:18px;font-size:11.67px;line-height:14px;transform:scaleY(1.17);transform-origin:0 0;color:#000;font-weight:bold">0</div>
<div class="a rn" style="left:2px;top:33px">VIF</div>
<div class="a m" style="left:33px;top:33px;font-size:11.67px;line-height:14px;transform:scaleY(1.17);transform-origin:0 0;color:#000;font-weight:bold">0</div>
<div class="a rn" style="left:2px;top:48px">AC</div>
<div class="a m" style="left:33px;top:48px;font-size:11.67px;line-height:14px;transform:scaleY(1.17);transform-origin:0 0;color:#000;font-weight:bold">0</div>
<div class="a rn" style="left:2px;top:63px">VM</div>
<div class="a m" style="left:33px;top:63px;font-size:11.67px;line-height:14px;transform:scaleY(1.17);transform-origin:0 0;color:#000;font-weight:bold">0</div>
<div class="a rn" style="left:2px;top:78px">RF</div>
<div class="a m" style="left:33px;top:78px;font-size:11.67px;line-height:14px;transform:scaleY(1.17);transform-origin:0 0;color:#000;font-weight:bold">0</div>
<div class="a rn" style="left:2px;top:93px">NT</div>
<div class="a m" style="left:33px;top:93px;font-size:11.67px;line-height:14px;transform:scaleY(1.17);transform-origin:0 0;color:#000;font-weight:bold">0</div>
<div class="a rn" style="left:2px;top:108px">IOPL</div>
<div class="a m" style="left:33px;top:108px;font-size:11.67px;line-height:14px;transform:scaleY(1.17);transform-origin:0 0;color:#000;font-weight:bold">0</div>
</div>
<div class="a" style="left:1353px;top:307px;width:575px;height:30px;background:#f0f0f0;border:1px solid #858b93"></div>
<svg class="a" style="left:1357px;top:313px" width="17" height="17" viewBox="0 0 17 17"><defs><linearGradient id="mtb" x1="0" x2="1"><stop offset="0" stop-color="#50e8ff"/><stop offset="1" stop-color="#2030d0"/></linearGradient></defs><rect x="1.5" y="1.5" width="14" height="14" fill="#f8fcff" stroke="#3a70e0"/><rect x="1" y="1" width="15" height="2.2" fill="url(#mtb)"/><path d="M0.6 7.6H5L7.6 10.2V16.4H0.6Z" fill="#fff" stroke="#1a4a8a" stroke-width="1.1"/><path d="M2 12.3h4M2 14.3h4" stroke="#3a70b0" stroke-width="0.9"/><rect x="9.1" y="5.5" width="4.6" height="9" rx="1.2" fill="#fff" stroke="#1a4a8a" stroke-width="1.1"/><path d="M9.1 8.5h4.6" stroke="#1a4a8a" stroke-width="0.9"/></svg>
<div class="a sc" style="left:1379px;top:315px"><i style="transform:translateX(0.30px) scaleX(0.467);transform-origin:0 0">M</i><i style="transform:translateX(0.30px) scaleX(0.831);transform-origin:0 0">o</i><i style="transform:translateX(0.30px) scaleX(0.831);transform-origin:0 0">d</i><i style="transform:translateX(0.30px) scaleX(0.831);transform-origin:0 0">u</i><i>l</i><i style="transform:translateX(0.30px) scaleX(0.936);transform-origin:0 0">e</i><i>s</i></div>
<svg class="a" style="left:1857px;top:318px" width="11" height="10" viewBox="0 0 11 10"><rect x="0.5" y="0.5" width="10" height="9" fill="none" stroke="#1a1a1a"/><rect x="0.5" y="0.5" width="10" height="2" fill="#1a1a1a"/></svg>
<svg class="a" style="left:1884px;top:318px" width="9" height="9" viewBox="0 0 9 9"><rect x="2.5" y="0.5" width="6" height="5" fill="none" stroke="#1a1a1a"/><rect x="2.5" y="0.5" width="6" height="1.5" fill="#1a1a1a"/><rect x="0.5" y="3.5" width="6" height="5" fill="#f0f0f0" stroke="#1a1a1a"/><rect x="0.5" y="3.5" width="6" height="1.5" fill="#1a1a1a"/></svg>
<svg class="a" style="left:1910px;top:318px" width="9" height="9" viewBox="0 0 9 9"><path d="M0.8 0.8L8.2 8.2M8.2 0.8L0.8 8.2" stroke="#1a1a1a" stroke-width="1.7"/></svg>
<div class="a" style="left:1353px;top:339px;width:575px;height:102px;background:#ffffff;border:1px solid #858b93"></div>
<div class="a" style="left:1910px;top:340px;width:17px;height:100px;background:#f0f0f0"></div>
<div class="a" style="left:1917px;top:357px;width:2px;height:18px;background:#808080;border-radius:1px"></div>
<div class="a" style="left:1354px;top:424px;width:573px;height:16px;background:#f0f0f0"></div>
<div class="a" style="left:1371px;top:431px;width:467px;height:3px;background:#8a8a8a;border-radius:1px"></div>
<div class="a" style="left:1688px;top:340px;width:1px;height:25px;background:#e5e5e5"></div>
<div class="a" style="left:1831px;top:340px;width:1px;height:25px;background:#e5e5e5"></div>
<div class="a s" style="left:1358px;top:345px;font-size:12.5px;line-height:14px">Path</div>
<div class="a s" style="left:1693px;top:345px;font-size:12.5px;line-height:14px">Base</div>
<div class="a s" style="left:1835px;top:345px;font-size:12.5px;line-height:14px">Size</div>
<svg class="a" style="left:1357px;top:365px" width="17" height="17" viewBox="0 0 17 17"><defs><linearGradient id="mtb" x1="0" x2="1"><stop offset="0" stop-color="#50e8ff"/><stop offset="1" stop-color="#2030d0"/></linearGradient></defs><rect x="1.5" y="1.5" width="14" height="14" fill="#f8fcff" stroke="#3a70e0"/><rect x="1" y="1" width="15" height="2.2" fill="url(#mtb)"/><path d="M0.6 7.6H5L7.6 10.2V16.4H0.6Z" fill="#fff" stroke="#1a4a8a" stroke-width="1.1"/><path d="M2 12.3h4M2 14.3h4" stroke="#3a70b0" stroke-width="0.9"/><rect x="9.1" y="5.5" width="4.6" height="9" rx="1.2" fill="#fff" stroke="#1a4a8a" stroke-width="1.1"/><path d="M9.1 8.5h4.6" stroke="#1a4a8a" stroke-width="0.9"/></svg>
<div class="a sc" style="left:1378px;top:365px"><i>/</i><i style="transform:translateX(0.30px) scaleX(0.831);transform-origin:0 0">u</i><i>s</i><i>r</i><i>/</i><i style="transform:translateX(0.30px) scaleX(0.831);transform-origin:0 0">b</i><i>i</i><i style="transform:translateX(0.30px) scaleX(0.831);transform-origin:0 0">n</i><i>/</i><i style="transform:translateX(0.30px) scaleX(0.831);transform-origin:0 0">p</i><i style="transform:translateX(0.30px) scaleX(0.831);transform-origin:0 0">y</i><i>t</i><i style="transform:translateX(0.30px) scaleX(0.831);transform-origin:0 0">h</i><i style="transform:translateX(0.30px) scaleX(0.831);transform-origin:0 0">o</i><i style="transform:translateX(0.30px) scaleX(0.831);transform-origin:0 0">n</i><i style="transform:translateX(0.30px) scaleX(0.831);transform-origin:0 0">3</i><i>.</i><i style="transform:translateX(0.30px) scaleX(0.831);transform-origin:0 0">8</i></div>
<div class="a sc" style="left:1692px;top:365px"><i style="transform:translateX(0.30px) scaleX(0.831);transform-origin:0 0">0</i><i style="transform:translateX(0.30px) scaleX(0.831);transform-origin:0 0">0</i><i style="transform:translateX(0.30px) scaleX(0.831);transform-origin:0 0">0</i><i style="transform:translateX(0.30px) scaleX(0.831);transform-origin:0 0">0</i><i style="transform:translateX(0.30px) scaleX(0.831);transform-origin:0 0">0</i><i style="transform:translateX(0.30px) scaleX(0.831);transform-origin:0 0">0</i><i style="transform:translateX(0.30px) scaleX(0.831);transform-origin:0 0">0</i><i style="transform:translateX(0.30px) scaleX(0.831);transform-origin:0 0">0</i><i style="transform:translateX(0.30px) scaleX(0.831);transform-origin:0 0">0</i><i style="transform:translateX(0.30px) scaleX(0.831);transform-origin:0 0">0</i><i style="transform:translateX(0.30px) scaleX(0.831);transform-origin:0 0">4</i><i style="transform:translateX(0.30px) scaleX(0.831);transform-origin:0 0">0</i><i style="transform:translateX(0.30px) scaleX(0.831);transform-origin:0 0">0</i><i style="transform:translateX(0.30px) scaleX(0.831);transform-origin:0 0">0</i><i style="transform:translateX(0.30px) scaleX(0.831);transform-origin:0 0">0</i><i style="transform:translateX(0.30px) scaleX(0.831);transform-origin:0 0">0</i></div>
<div class="a sc" style="left:1835px;top:365px;width:75px;overflow:hidden"><i style="transform:translateX(0.30px) scaleX(0.831);transform-origin:0 0">0</i><i style="transform:translateX(0.30px) scaleX(0.831);transform-origin:0 0">0</i><i style="transform:translateX(0.30px) scaleX(0.831);transform-origin:0 0">0</i><i style="transform:translateX(0.30px) scaleX(0.831);transform-origin:0 0">0</i><i style="transform:translateX(0.30px) scaleX(0.831);transform-origin:0 0">0</i><i style="transform:translateX(0.30px) scaleX(0.831);transform-origin:0 0">0</i><i style="transform:translateX(0.30px) scaleX(0.831);transform-origin:0 0">0</i><i style="transform:translateX(0.30px) scaleX(0.831);transform-origin:0 0">0</i><i style="transform:translateX(0.30px) scaleX(0.831);transform-origin:0 0">0</i><i style="transform:translateX(0.30px) scaleX(0.831);transform-origin:0 0">0</i><i style="transform:translateX(0.30px) scaleX(0.831);transform-origin:0 0">4</i><i style="transform:translateX(0.30px) scaleX(0.680);transform-origin:0 0">E</i><i style="transform:translateX(0.30px) scaleX(0.831);transform-origin:0 0">9</i></div>
<svg class="a" style="left:1357px;top:379px" width="17" height="17" viewBox="0 0 17 17"><defs><linearGradient id="mtb" x1="0" x2="1"><stop offset="0" stop-color="#50e8ff"/><stop offset="1" stop-color="#2030d0"/></linearGradient></defs><rect x="1.5" y="1.5" width="14" height="14" fill="#f8fcff" stroke="#3a70e0"/><rect x="1" y="1" width="15" height="2.2" fill="url(#mtb)"/><path d="M0.6 7.6H5L7.6 10.2V16.4H0.6Z" fill="#fff" stroke="#1a4a8a" stroke-width="1.1"/><path d="M2 12.3h4M2 14.3h4" stroke="#3a70b0" stroke-width="0.9"/><rect x="9.1" y="5.5" width="4.6" height="9" rx="1.2" fill="#fff" stroke="#1a4a8a" stroke-width="1.1"/><path d="M9.1 8.5h4.6" stroke="#1a4a8a" stroke-width="0.9"/></svg>
<div class="a sc" style="left:1378px;top:379px"><i>/</i><i style="transform:translateX(0.30px) scaleX(0.831);transform-origin:0 0">h</i><i style="transform:translateX(0.30px) scaleX(0.831);transform-origin:0 0">o</i><i style="transform:translateX(0.30px) scaleX(0.534);transform-origin:0 0">m</i><i style="transform:translateX(0.30px) scaleX(0.936);transform-origin:0 0">e</i><i>/</i><i style="transform:translateX(0.30px) scaleX(0.534);transform-origin:0 0">m</i><i style="transform:translateX(0.30px) scaleX(0.831);transform-origin:0 0">o</i><i style="transform:translateX(0.30px) scaleX(0.831);transform-origin:0 0">u</i><i>/</i><i style="width:12px">桌</i><i style="width:12px">面</i><i>/</i><i style="transform:translateX(0.30px) scaleX(0.534);transform-origin:0 0">m</i><i style="transform:translateX(0.30px) scaleX(0.936);transform-origin:0 0">a</i><i style="transform:translateX(0.30px) scaleX(0.936);transform-origin:0 0">z</i><i style="transform:translateX(0.30px) scaleX(0.936);transform-origin:0 0">e</i><i>.</i><i>s</i><i style="transform:translateX(0.30px) scaleX(0.831);transform-origin:0 0">o</i></div>
<div class="a sc" style="left:1692px;top:379px"><i style="transform:translateX(0.30px) scaleX(0.831);transform-origin:0 0">0</i><i style="transform:translateX(0.30px) scaleX(0.831);transform-origin:0 0">0</i><i style="transform:translateX(0.30px) scaleX(0.831);transform-origin:0 0">0</i><i style="transform:translateX(0.30px) scaleX(0.831);transform-origin:0 0">0</i><i style="transform:translateX(0.30px) scaleX(0.831);transform-origin:0 0">7</i><i style="transform:translateX(0.30px) scaleX(0.747);transform-origin:0 0">F</i><i style="transform:translateX(0.30px) scaleX(0.831);transform-origin:0 0">6</i><i style="transform:translateX(0.30px) scaleX(0.831);transform-origin:0 0">8</i><i style="transform:translateX(0.30px) scaleX(0.575);transform-origin:0 0">D</i><i style="transform:translateX(0.30px) scaleX(0.623);transform-origin:0 0">B</i><i style="transform:translateX(0.30px) scaleX(0.831);transform-origin:0 0">9</i><i style="transform:translateX(0.30px) scaleX(0.623);transform-origin:0 0">B</i><i style="transform:translateX(0.30px) scaleX(0.575);transform-origin:0 0">A</i><i style="transform:translateX(0.30px) scaleX(0.831);transform-origin:0 0">0</i><i style="transform:translateX(0.30px) scaleX(0.831);transform-origin:0 0">0</i><i style="transform:translateX(0.30px) scaleX(0.831);transform-origin:0 0">0</i></div>
<div class="a sc" style="left:1835px;top:379px;width:75px;overflow:hidden"><i style="transform:translateX(0.30px) scaleX(0.831);transform-origin:0 0">0</i><i style="transform:translateX(0.30px) scaleX(0.831);transform-origin:0 0">0</i><i style="transform:translateX(0.30px) scaleX(0.831);transform-origin:0 0">0</i><i style="transform:translateX(0.30px) scaleX(0.831);transform-origin:0 0">0</i><i style="transform:translateX(0.30px) scaleX(0.831);transform-origin:0 0">0</i><i style="transform:translateX(0.30px) scaleX(0.831);transform-origin:0 0">0</i><i style="transform:translateX(0.30px) scaleX(0.831);transform-origin:0 0">0</i><i style="transform:translateX(0.30px) scaleX(0.831);transform-origin:0 0">0</i><i style="transform:translateX(0.30px) scaleX(0.831);transform-origin:0 0">0</i><i style="transform:translateX(0.30px) scaleX(0.831);transform-origin:0 0">0</i><i style="transform:translateX(0.30px) scaleX(0.831);transform-origin:0 0">0</i><i style="transform:translateX(0.30px) scaleX(0.831);transform-origin:0 0">4</i><i style="transform:translateX(0.30px) scaleX(0.831);transform-origin:0 0">5</i></div>
<svg class="a" style="left:1357px;top:393px" width="17" height="17" viewBox="0 0 17 17"><defs><linearGradient id="mtb" x1="0" x2="1"><stop offset="0" stop-color="#50e8ff"/><stop offset="1" stop-color="#2030d0"/></linearGradient></defs><rect x="1.5" y="1.5" width="14" height="14" fill="#f8fcff" stroke="#3a70e0"/><rect x="1" y="1" width="15" height="2.2" fill="url(#mtb)"/><path d="M0.6 7.6H5L7.6 10.2V16.4H0.6Z" fill="#fff" stroke="#1a4a8a" stroke-width="1.1"/><path d="M2 12.3h4M2 14.3h4" stroke="#3a70b0" stroke-width="0.9"/><rect x="9.1" y="5.5" width="4.6" height="9" rx="1.2" fill="#fff" stroke="#1a4a8a" stroke-width="1.1"/><path d="M9.1 8.5h4.6" stroke="#1a4a8a" stroke-width="0.9"/></svg>
<div class="a sc" style="left:1378px;top:393px"><i>/</i><i style="transform:translateX(0.30px) scaleX(0.831);transform-origin:0 0">u</i><i>s</i><i>r</i><i>/</i><i>l</i><i>i</i><i style="transform:translateX(0.30px) scaleX(0.831);transform-origin:0 0">b</i><i>/</i><i style="transform:translateX(0.30px) scaleX(0.831);transform-origin:0 0">x</i><i style="transform:translateX(0.30px) scaleX(0.831);transform-origin:0 0">8</i><i style="transform:translateX(0.30px) scaleX(0.831);transform-origin:0 0">6</i><i style="transform:translateX(0.30px) scaleX(0.831);transform-origin:0 0">_</i><i style="transform:translateX(0.30px) scaleX(0.831);transform-origin:0 0">6</i><i style="transform:translateX(0.30px) scaleX(0.831);transform-origin:0 0">4</i><i>-</i><i>l</i><i>i</i><i style="transform:translateX(0.30px) scaleX(0.831);transform-origin:0 0">n</i><i style="transform:translateX(0.30px) scaleX(0.831);transform-origin:0 0">u</i><i style="transform:translateX(0.30px) scaleX(0.831);transform-origin:0 0">x</i><i>-</i><i style="transform:translateX(0.30px) scaleX(0.831);transform-origin:0 0">g</i><i style="transform:translateX(0.30px) scaleX(0.831);transform-origin:0 0">n</i><i style="transform:translateX(0.30px) scaleX(0.831);transform-origin:0 0">u</i><i>/</i><i>l</i><i>i</i><i style="transform:translateX(0.30px) scaleX(0.831);transform-origin:0 0">b</i><i>t</i><i>i</i><i style="transform:translateX(0.30px) scaleX(0.831);transform-origin:0 0">n</i><i>f</i><i style="transform:translateX(0.30px) scaleX(0.831);transform-origin:0 0">o</i><i>.</i><i>s</i><i style="transform:translateX(0.30px) scaleX(0.831);transform-origin:0 0">o</i><i>.</i><i style="transform:translateX(0.30px) scaleX(0.831);transform-origin:0 0">6</i><i>.</i><i style="transform:translateX(0.30px) scaleX(0.831);transform-origin:0 0">3</i></div>
<div class="a sc" style="left:1692px;top:393px"><i style="transform:translateX(0.30px) scaleX(0.831);transform-origin:0 0">0</i><i style="transform:translateX(0.30px) scaleX(0.831);transform-origin:0 0">0</i><i style="transform:translateX(0.30px) scaleX(0.831);transform-origin:0 0">0</i><i style="transform:translateX(0.30px) scaleX(0.831);transform-origin:0 0">0</i><i style="transform:translateX(0.30px) scaleX(0.831);transform-origin:0 0">7</i><i style="transform:translateX(0.30px) scaleX(0.747);transform-origin:0 0">F</i><i style="transform:translateX(0.30px) scaleX(0.831);transform-origin:0 0">6</i><i style="transform:translateX(0.30px) scaleX(0.831);transform-origin:0 0">8</i><i style="transform:translateX(0.30px) scaleX(0.575);transform-origin:0 0">D</i><i style="transform:translateX(0.30px) scaleX(0.623);transform-origin:0 0">C</i><i style="transform:translateX(0.30px) scaleX(0.831);transform-origin:0 0">2</i><i style="transform:translateX(0.30px) scaleX(0.623);transform-origin:0 0">B</i><i style="transform:translateX(0.30px) scaleX(0.575);transform-origin:0 0">A</i><i style="transform:translateX(0.30px) scaleX(0.831);transform-origin:0 0">0</i><i style="transform:translateX(0.30px) scaleX(0.831);transform-origin:0 0">0</i><i style="transform:translateX(0.30px) scaleX(0.831);transform-origin:0 0">0</i></div>
<div class="a sc" style="left:1835px;top:393px;width:75px;overflow:hidden"><i style="transform:translateX(0.30px) scaleX(0.831);transform-origin:0 0">0</i><i style="transform:translateX(0.30px) scaleX(0.831);transform-origin:0 0">0</i><i style="transform:translateX(0.30px) scaleX(0.831);transform-origin:0 0">0</i><i style="transform:translateX(0.30px) scaleX(0.831);transform-origin:0 0">0</i><i style="transform:translateX(0.30px) scaleX(0.831);transform-origin:0 0">0</i><i style="transform:translateX(0.30px) scaleX(0.831);transform-origin:0 0">0</i><i style="transform:translateX(0.30px) scaleX(0.831);transform-origin:0 0">0</i><i style="transform:translateX(0.30px) scaleX(0.831);transform-origin:0 0">0</i><i style="transform:translateX(0.30px) scaleX(0.831);transform-origin:0 0">0</i><i style="transform:translateX(0.30px) scaleX(0.831);transform-origin:0 0">0</i><i style="transform:translateX(0.30px) scaleX(0.831);transform-origin:0 0">0</i><i style="transform:translateX(0.30px) scaleX(0.831);transform-origin:0 0">3</i><i style="transform:translateX(0.30px) scaleX(0.831);transform-origin:0 0">2</i></div>
<svg class="a" style="left:1357px;top:407px" width="17" height="17" viewBox="0 0 17 17"><defs><linearGradient id="mtb" x1="0" x2="1"><stop offset="0" stop-color="#50e8ff"/><stop offset="1" stop-color="#2030d0"/></linearGradient></defs><rect x="1.5" y="1.5" width="14" height="14" fill="#f8fcff" stroke="#3a70e0"/><rect x="1" y="1" width="15" height="2.2" fill="url(#mtb)"/><path d="M0.6 7.6H5L7.6 10.2V16.4H0.6Z" fill="#fff" stroke="#1a4a8a" stroke-width="1.1"/><path d="M2 12.3h4M2 14.3h4" stroke="#3a70b0" stroke-width="0.9"/><rect x="9.1" y="5.5" width="4.6" height="9" rx="1.2" fill="#fff" stroke="#1a4a8a" stroke-width="1.1"/><path d="M9.1 8.5h4.6" stroke="#1a4a8a" stroke-width="0.9"/></svg>
<div class="a sc" style="left:1378px;top:407px"><i>/</i><i style="transform:translateX(0.30px) scaleX(0.831);transform-origin:0 0">u</i><i>s</i><i>r</i><i>/</i><i>l</i><i>i</i><i style="transform:translateX(0.30px) scaleX(0.831);transform-origin:0 0">b</i><i>/</i><i style="transform:translateX(0.30px) scaleX(0.831);transform-origin:0 0">x</i><i style="transform:translateX(0.30px) scaleX(0.831);transform-origin:0 0">8</i><i style="transform:translateX(0.30px) scaleX(0.831);transform-origin:0 0">6</i><i style="transform:translateX(0.30px) scaleX(0.831);transform-origin:0 0">_</i><i style="transform:translateX(0.30px) scaleX(0.831);transform-origin:0 0">6</i><i style="transform:translateX(0.30px) scaleX(0.831);transform-origin:0 0">4</i><i>-</i><i>l</i><i>i</i><i style="transform:translateX(0.30px) scaleX(0.831);transform-origin:0 0">n</i><i style="transform:translateX(0.30px) scaleX(0.831);transform-origin:0 0">u</i><i style="transform:translateX(0.30px) scaleX(0.831);transform-origin:0 0">x</i><i>-</i><i style="transform:translateX(0.30px) scaleX(0.831);transform-origin:0 0">g</i><i style="transform:translateX(0.30px) scaleX(0.831);transform-origin:0 0">n</i><i style="transform:translateX(0.30px) scaleX(0.831);transform-origin:0 0">u</i><i>/</i><i>l</i><i>i</i><i style="transform:translateX(0.30px) scaleX(0.831);transform-origin:0 0">b</i><i>r</i><i style="transform:translateX(0.30px) scaleX(0.936);transform-origin:0 0">e</i><i style="transform:translateX(0.30px) scaleX(0.936);transform-origin:0 0">a</i><i style="transform:translateX(0.30px) scaleX(0.831);transform-origin:0 0">d</i><i>l</i><i>i</i><i style="transform:translateX(0.30px) scaleX(0.831);transform-origin:0 0">n</i><i style="transform:translateX(0.30px) scaleX(0.936);transform-origin:0 0">e</i><i>.</i><i>s</i><i style="transform:translateX(0.30px) scaleX(0.831);transform-origin:0 0">o</i><i>.</i><i style="transform:translateX(0.30px) scaleX(0.831);transform-origin:0 0">8</i><i>.</i><i style="transform:translateX(0.30px) scaleX(0.831);transform-origin:0 0">1</i></div>
<div class="a sc" style="left:1692px;top:407px"><i style="transform:translateX(0.30px) scaleX(0.831);transform-origin:0 0">0</i><i style="transform:translateX(0.30px) scaleX(0.831);transform-origin:0 0">0</i><i style="transform:translateX(0.30px) scaleX(0.831);transform-origin:0 0">0</i><i style="transform:translateX(0.30px) scaleX(0.831);transform-origin:0 0">0</i><i style="transform:translateX(0.30px) scaleX(0.831);transform-origin:0 0">7</i><i style="transform:translateX(0.30px) scaleX(0.747);transform-origin:0 0">F</i><i style="transform:translateX(0.30px) scaleX(0.831);transform-origin:0 0">6</i><i style="transform:translateX(0.30px) scaleX(0.831);transform-origin:0 0">8</i><i style="transform:translateX(0.30px) scaleX(0.575);transform-origin:0 0">D</i><i style="transform:translateX(0.30px) scaleX(0.623);transform-origin:0 0">C</i><i style="transform:translateX(0.30px) scaleX(0.831);transform-origin:0 0">2</i><i style="transform:translateX(0.30px) scaleX(0.680);transform-origin:0 0">E</i><i style="transform:translateX(0.30px) scaleX(0.623);transform-origin:0 0">C</i><i style="transform:translateX(0.30px) scaleX(0.831);transform-origin:0 0">0</i><i style="transform:translateX(0.30px) scaleX(0.831);transform-origin:0 0">0</i><i style="transform:translateX(0.30px) scaleX(0.831);transform-origin:0 0">0</i></div>
<div class="a sc" style="left:1835px;top:407px;width:75px;overflow:hidden"><i style="transform:translateX(0.30px) scaleX(0.831);transform-origin:0 0">0</i><i style="transform:translateX(0.30px) scaleX(0.831);transform-origin:0 0">0</i><i style="transform:translateX(0.30px) scaleX(0.831);transform-origin:0 0">0</i><i style="transform:translateX(0.30px) scaleX(0.831);transform-origin:0 0">0</i><i style="transform:translateX(0.30px) scaleX(0.831);transform-origin:0 0">0</i><i style="transform:translateX(0.30px) scaleX(0.831);transform-origin:0 0">0</i><i style="transform:translateX(0.30px) scaleX(0.831);transform-origin:0 0">0</i><i style="transform:translateX(0.30px) scaleX(0.831);transform-origin:0 0">0</i><i style="transform:translateX(0.30px) scaleX(0.831);transform-origin:0 0">0</i><i style="transform:translateX(0.30px) scaleX(0.831);transform-origin:0 0">0</i><i style="transform:translateX(0.30px) scaleX(0.831);transform-origin:0 0">0</i><i style="transform:translateX(0.30px) scaleX(0.831);transform-origin:0 0">5</i><i style="transform:translateX(0.30px) scaleX(0.831);transform-origin:0 0">3</i></div>
<div class="a" style="left:1353px;top:467px;width:575px;height:30px;background:#f0f0f0;border:1px solid #858b93"></div>
<svg class="a" style="left:1357px;top:473px" width="17" height="16" viewBox="0 0 17 16"><rect x="0.5" y="0.5" width="16" height="15" fill="#f4f8ff" stroke="#2a78d8"/><rect x="1" y="1" width="15" height="2" fill="#40a8f0"/><rect x="3.5" y="4.5" width="6" height="6" fill="#fff" stroke="#2a5aa0"/><rect x="7.5" y="7.5" width="6" height="6" fill="#fff" stroke="#2a5aa0"/></svg>
<div class="a sc" style="left:1378px;top:475px"><i style="transform:translateX(0.30px) scaleX(0.680);transform-origin:0 0">T</i><i style="transform:translateX(0.30px) scaleX(0.831);transform-origin:0 0">h</i><i>r</i><i style="transform:translateX(0.30px) scaleX(0.936);transform-origin:0 0">e</i><i style="transform:translateX(0.30px) scaleX(0.936);transform-origin:0 0">a</i><i style="transform:translateX(0.30px) scaleX(0.831);transform-origin:0 0">d</i><i>s</i></div>
<svg class="a" style="left:1857px;top:478px" width="11" height="10" viewBox="0 0 11 10"><rect x="0.5" y="0.5" width="10" height="9" fill="none" stroke="#1a1a1a"/><rect x="0.5" y="0.5" width="10" height="2" fill="#1a1a1a"/></svg>
<svg class="a" style="left:1884px;top:478px" width="9" height="9" viewBox="0 0 9 9"><rect x="2.5" y="0.5" width="6" height="5" fill="none" stroke="#1a1a1a"/><rect x="2.5" y="0.5" width="6" height="1.5" fill="#1a1a1a"/><rect x="0.5" y="3.5" width="6" height="5" fill="#f0f0f0" stroke="#1a1a1a"/><rect x="0.5" y="3.5" width="6" height="1.5" fill="#1a1a1a"/></svg>
<svg class="a" style="left:1910px;top:478px" width="9" height="9" viewBox="0 0 9 9"><path d="M0.8 0.8L8.2 8.2M8.2 0.8L0.8 8.2" stroke="#1a1a1a" stroke-width="1.7"/></svg>
<div class="a" style="left:1353px;top:499px;width:575px;height:123px;background:#ffffff;border:1px solid #858b93"></div>
<div class="a" style="left:1416px;top:500px;width:1px;height:25px;background:#e5e5e5"></div>
<div class="a" style="left:1463px;top:500px;width:1px;height:25px;background:#e5e5e5"></div>
<div class="a" style="left:1550px;top:500px;width:1px;height:25px;background:#e5e5e5"></div>
<div class="a s" style="left:1358px;top:505px;font-size:12.5px;line-height:14px">Decimal</div>
<div class="a s" style="left:1421px;top:505px;font-size:12.5px;line-height:14px">Hex</div>
<div class="a s" style="left:1468px;top:505px;font-size:12.5px;line-height:14px">State</div>
<div class="a s" style="left:1555px;top:505px;font-size:12.5px;line-height:14px">Name</div>
<svg class="a" style="left:1357px;top:525px" width="17" height="16" viewBox="0 0 17 16"><rect x="0.5" y="0.5" width="16" height="15" fill="#f4f8ff" stroke="#2a78d8"/><rect x="1" y="1" width="15" height="2" fill="#40a8f0"/><rect x="3.5" y="4.5" width="6" height="6" fill="#fff" stroke="#2a5aa0"/><rect x="7.5" y="7.5" width="6" height="6" fill="#fff" stroke="#2a5aa0"/></svg>
<div class="a sc" style="left:1380px;top:526px;-webkit-text-stroke:0.5px #000"><i style="transform:translateX(0.30px) scaleX(0.831);transform-origin:0 0">7</i><i style="transform:translateX(0.30px) scaleX(0.831);transform-origin:0 0">6</i><i style="transform:translateX(0.30px) scaleX(0.831);transform-origin:0 0">7</i><i style="transform:translateX(0.30px) scaleX(0.831);transform-origin:0 0">0</i></div>
<div class="a sc" style="left:1420px;top:526px;-webkit-text-stroke:0.5px #000"><i style="transform:translateX(0.30px) scaleX(0.831);transform-origin:0 0">1</i><i style="transform:translateX(0.30px) scaleX(0.575);transform-origin:0 0">D</i><i style="transform:translateX(0.30px) scaleX(0.747);transform-origin:0 0">F</i><i style="transform:translateX(0.30px) scaleX(0.831);transform-origin:0 0">6</i></div>
<div class="a sc" style="left:1467px;top:526px;-webkit-text-stroke:0.5px #000"><i style="transform:translateX(0.30px) scaleX(0.623);transform-origin:0 0">R</i><i style="transform:translateX(0.30px) scaleX(0.936);transform-origin:0 0">e</i><i style="transform:translateX(0.30px) scaleX(0.936);transform-origin:0 0">a</i><i style="transform:translateX(0.30px) scaleX(0.831);transform-origin:0 0">d</i><i style="transform:translateX(0.30px) scaleX(0.831);transform-origin:0 0">y</i></div>
<div class="a sc" style="left:1554px;top:526px;-webkit-text-stroke:0.5px #000"><i style="transform:translateX(0.30px) scaleX(0.831);transform-origin:0 0">p</i><i style="transform:translateX(0.30px) scaleX(0.831);transform-origin:0 0">y</i><i>t</i><i style="transform:translateX(0.30px) scaleX(0.831);transform-origin:0 0">h</i><i style="transform:translateX(0.30px) scaleX(0.831);transform-origin:0 0">o</i><i style="transform:translateX(0.30px) scaleX(0.831);transform-origin:0 0">n</i><i style="transform:translateX(0.30px) scaleX(0.831);transform-origin:0 0">3</i><i>.</i><i style="transform:translateX(0.30px) scaleX(0.831);transform-origin:0 0">8</i></div>
<!-- /RIGHT PANELS -->
<!-- BOTTOM PANELS -->
<div class="a" style="left:8px;top:626px;width:1187px;height:30px;background:#f0f0f0;border:1px solid #858b93"></div>
<svg class="a" style="left:12px;top:632px" width="16" height="16" viewBox="0 0 16 16"><defs><linearGradient id="htb" x1="0" x2="1"><stop offset="0" stop-color="#40e0ff"/><stop offset="1" stop-color="#2040c0"/></linearGradient></defs><rect x="0.5" y="0.5" width="14" height="14" fill="#fff" stroke="#2a70e0"/><rect x="0" y="0" width="15" height="2.5" fill="url(#htb)"/><path d="M7.5 3.8L11.1 5.9V10.1L7.5 12.2L3.9 10.1V5.9Z" fill="#e4ecff" stroke="#3030f0" stroke-width="1.1"/></svg>
<div class="a sc" style="left:34px;top:634px"><i style="transform:translateX(0.30px) scaleX(0.575);transform-origin:0 0">H</i><i style="transform:translateX(0.30px) scaleX(0.936);transform-origin:0 0">e</i><i style="transform:translateX(0.30px) scaleX(0.831);transform-origin:0 0">x</i><i>&nbsp;</i><i style="transform:translateX(0.30px) scaleX(0.575);transform-origin:0 0">V</i><i>i</i><i style="transform:translateX(0.30px) scaleX(0.936);transform-origin:0 0">e</i><i style="transform:translateX(0.30px) scaleX(0.575);transform-origin:0 0">w</i><i>-</i><i style="transform:translateX(0.30px) scaleX(0.831);transform-origin:0 0">1</i></div>
<svg class="a" style="left:1123px;top:636px" width="11" height="10" viewBox="0 0 11 10"><rect x="0.5" y="0.5" width="10" height="9" fill="none" stroke="#1a1a1a"/><rect x="0.5" y="0.5" width="10" height="2" fill="#1a1a1a"/></svg>
<svg class="a" style="left:1150px;top:636px" width="9" height="9" viewBox="0 0 9 9"><rect x="2.5" y="0.5" width="6" height="5" fill="none" stroke="#1a1a1a"/><rect x="2.5" y="0.5" width="6" height="1.5" fill="#1a1a1a"/><rect x="0.5" y="3.5" width="6" height="5" fill="#f0f0f0" stroke="#1a1a1a"/><rect x="0.5" y="3.5" width="6" height="1.5" fill="#1a1a1a"/></svg>
<svg class="a" style="left:1176px;top:636px" width="9" height="9" viewBox="0 0 9 9"><path d="M0.8 0.8L8.2 8.2M8.2 0.8L0.8 8.2" stroke="#1a1a1a" stroke-width="1.7"/></svg>
<div class="a" style="left:8px;top:655px;width:1187px;height:157px;background:#f0f0f0;border:1px solid #858b93"></div>
<div class="a" style="left:9px;top:659px;width:1168px;height:132px;background:#c8ffff"></div>
<div class="a" style="left:9px;top:719px;width:1168px;height:15px;background:#b8e4e4"></div>
<div class="a" style="left:219px;top:719px;width:77px;height:15px;background:#7878e0"></div>
<div class="a" style="left:1185px;top:705px;width:2px;height:18px;background:#808080;border-radius:1px"></div>
<div class="a" style="left:9px;top:659px;width:1168px;height:132px;overflow:hidden">
<div class="a m pre mc" style="left:0px;top:1.5px"><span style="color:#808080">00007F68DB9BA000</span>  <span style="color:#8080ff">7F 45 4C 46 02 01 01 00  00 00 00 00 00 00 00 00</span>  <span style="color:#0000ff">.ELF............</span></div>
<div class="a m pre mc" style="left:0px;top:16.5px"><span style="color:#808080">00007F68DB9BA010</span>  <span style="color:#8080ff">03 00 3E 00 01 00 00 00  C0 5F 00 00 00 00 00 00</span>  <span style="color:#0000ff">..&gt;.............</span></div>
<div class="a m pre mc" style="left:0px;top:31.5px"><span style="color:#808080">00007F68DB9BA020</span>  <span style="color:#8080ff">40 00 00 00 00 00 00 00  E8 90 2F 00 00 00 00 00</span>  <span style="color:#0000ff">@...............</span></div>
<div class="a m pre mc" style="left:0px;top:46.5px"><span style="color:#808080">00007F68DB9BA030</span>  <span style="color:#8080ff">00 00 00 00 40 00 38 00  0B 00 40 00 25 00 24 00</span>  <span style="color:#0000ff">....@.8...@.%.$.</span></div>
<div class="a m pre mc" style="left:0px;top:61.5px"><span style="color:#808080">00007F68DB9BA040</span>  <span style="color:#8080ff">01 00 00 00 <span style="color:#fff">04 00 00 00</span>  00 00 00 00 00 00 00 00</span>  <span style="color:#0000ff">................</span></div>
<div class="a m pre mc" style="left:0px;top:76.5px"><span style="color:#808080">00007F68DB9BA050</span>  <span style="color:#8080ff">00 00 00 00 00 00 00 00  00 00 00 00 00 00 00 00</span>  <span style="color:#0000ff">................</span></div>
<div class="a m pre mc" style="left:0px;top:91.5px"><span style="color:#808080">00007F68DB9BA060</span>  <span style="color:#8080ff">40 40 00 00 00 00 00 00  40 40 00 00 00 00 00 00</span>  <span style="color:#0000ff">@@......@@......</span></div>
<div class="a m pre mc" style="left:0px;top:106.5px"><span style="color:#808080">00007F68DB9BA070</span>  <span style="color:#8080ff">00 10 00 00 00 00 00 00  01 00 00 00 05 00 00 00</span>  <span style="color:#0000ff">................</span></div>
<div class="a m pre mc" style="left:0px;top:121.5px"><span style="color:#808080">00007F68DB9BA080</span>  <span style="color:#8080ff">00 50 00 00 00 00 00 00  00 50 00 00 00 00 00 00</span>  <span style="color:#0000ff">.P.......P......</span></div>
</div>
<div class="a" style="left:68px;top:793px;width:1px;height:16px;background:#dcdcdc"></div>
<div class="a" style="left:360px;top:793px;width:1px;height:16px;background:#dcdcdc"></div>
<div class="a sc7" style="left:12px;top:795px"><i>0</i><i>0</i><i>0</i><i>0</i><i>0</i><i>0</i><i>4</i><i>5</i></div>
<div class="a sc7" style="left:73px;top:795px"><i>0</i><i>0</i><i>0</i><i>0</i><i>7</i><i style="transform:translateX(0.30px) scaleX(0.921);transform-origin:0 0">F</i><i>6</i><i>8</i><i style="transform:translateX(0.30px) scaleX(0.709);transform-origin:0 0">D</i><i style="transform:translateX(0.30px) scaleX(0.768);transform-origin:0 0">B</i><i>9</i><i style="transform:translateX(0.30px) scaleX(0.768);transform-origin:0 0">B</i><i style="transform:translateX(0.30px) scaleX(0.709);transform-origin:0 0">A</i><i>0</i><i>4</i><i>5</i><i>:</i><i>&nbsp;</i><i style="transform:translateX(0.30px) scaleX(0.838);transform-origin:0 0">L</i><i style="transform:translateX(0.30px) scaleX(0.709);transform-origin:0 0">O</i><i style="transform:translateX(0.30px) scaleX(0.709);transform-origin:0 0">A</i><i style="transform:translateX(0.30px) scaleX(0.709);transform-origin:0 0">D</i><i>:</i><i>0</i><i>0</i><i>0</i><i>0</i><i>7</i><i style="transform:translateX(0.30px) scaleX(0.921);transform-origin:0 0">F</i><i>6</i><i>8</i><i style="transform:translateX(0.30px) scaleX(0.709);transform-origin:0 0">D</i><i style="transform:translateX(0.30px) scaleX(0.768);transform-origin:0 0">B</i><i>9</i><i style="transform:translateX(0.30px) scaleX(0.768);transform-origin:0 0">B</i><i style="transform:translateX(0.30px) scaleX(0.709);transform-origin:0 0">A</i><i>0</i><i>4</i><i>5</i></div>
<div class="a" style="left:1199px;top:626px;width:729px;height:30px;background:#f0f0f0;border:1px solid #858b93"></div>
<svg class="a" style="left:1203px;top:632px" width="16" height="16" viewBox="0 0 16 16"><defs><linearGradient id="htb" x1="0" x2="1"><stop offset="0" stop-color="#40e0ff"/><stop offset="1" stop-color="#2040c0"/></linearGradient></defs><rect x="0.5" y="0.5" width="14" height="14" fill="#fff" stroke="#2a70e0"/><rect x="0" y="0" width="15" height="2.5" fill="url(#htb)"/><path d="M7.5 3.8L11.1 5.9V10.1L7.5 12.2L3.9 10.1V5.9Z" fill="#e4ecff" stroke="#3030f0" stroke-width="1.1"/></svg>
<div class="a sc" style="left:1224px;top:634px"><i style="transform:translateX(0.30px) scaleX(0.747);transform-origin:0 0">S</i><i>t</i><i style="transform:translateX(0.30px) scaleX(0.936);transform-origin:0 0">a</i><i style="transform:translateX(0.30px) scaleX(0.936);transform-origin:0 0">c</i><i style="transform:translateX(0.30px) scaleX(0.831);transform-origin:0 0">k</i><i>&nbsp;</i><i style="transform:translateX(0.30px) scaleX(0.831);transform-origin:0 0">v</i><i>i</i><i style="transform:translateX(0.30px) scaleX(0.936);transform-origin:0 0">e</i><i style="transform:translateX(0.30px) scaleX(0.575);transform-origin:0 0">w</i></div>
<svg class="a" style="left:1857px;top:636px" width="11" height="10" viewBox="0 0 11 10"><rect x="0.5" y="0.5" width="10" height="9" fill="none" stroke="#1a1a1a"/><rect x="0.5" y="0.5" width="10" height="2" fill="#1a1a1a"/></svg>
<svg class="a" style="left:1884px;top:636px" width="9" height="9" viewBox="0 0 9 9"><rect x="2.5" y="0.5" width="6" height="5" fill="none" stroke="#1a1a1a"/><rect x="2.5" y="0.5" width="6" height="1.5" fill="#1a1a1a"/><rect x="0.5" y="3.5" width="6" height="5" fill="#f0f0f0" stroke="#1a1a1a"/><rect x="0.5" y="3.5" width="6" height="1.5" fill="#1a1a1a"/></svg>
<svg class="a" style="left:1910px;top:636px" width="9" height="9" viewBox="0 0 9 9"><path d="M0.8 0.8L8.2 8.2M8.2 0.8L0.8 8.2" stroke="#1a1a1a" stroke-width="1.7"/></svg>
<div class="a" style="left:1199px;top:655px;width:729px;height:157px;background:#f0f0f0;border:1px solid #858b93"></div>
<div class="a" style="left:1200px;top:659px;width:710px;height:132px;background:#c8ffff"></div>
<div class="a" style="left:1200px;top:659px;width:710px;height:15px;background:#60d8f4"></div>
<div class="a" style="left:1918px;top:775px;width:2px;height:16px;background:#808080;border-radius:1px"></div>
<div class="a" style="left:1200px;top:659px;width:710px;height:132px;overflow:hidden">
<div class="a m pre mc" style="left:0px;top:1.5px"><span style="color:#0000ff">00007FFC40F19318</span>  <span style="color:#009400">00007F68DB9DFC58</span>  <span style="color:#0000ff">__pyx_pw_4maze_3c29sdmU+8F8</span></div>
<div class="a m pre mc" style="left:0px;top:16.5px"><span style="color:#808080">00007FFC40F19320</span>  <span style="color:#009400">00007F68DB9839B0</span>  <span style="color:#808080">debug002:00007F68DB9839B0</span></div>
<div class="a m pre mc" style="left:0px;top:31.5px"><span style="color:#808080">00007FFC40F19328</span>  <span style="color:#009400">00007F68DC6D1420</span>  <span style="color:#808080">debug007:00007F68DC6D1420</span></div>
<div class="a m pre mc" style="left:0px;top:46.5px"><span style="color:#808080">00007FFC40F19330</span>  <span style="color:#009400">00007F68DC6D13E0</span>  <span style="color:#808080">debug007:00007F68DC6D13E0</span></div>
<div class="a m pre mc" style="left:0px;top:61.5px"><span style="color:#808080">00007FFC40F19338</span>  <span style="color:#009400">00007F68DB9839B0</span>  <span style="color:#808080">debug002:00007F68DB9839B0</span></div>
<div class="a m pre mc" style="left:0px;top:76.5px"><span style="color:#808080">00007FFC40F19340</span>  <span style="color:#009400">0000000000000000</span>  <span style="color:#808080"></span></div>
<div class="a m pre mc" style="left:0px;top:91.5px"><span style="color:#808080">00007FFC40F19348</span>  <span style="color:#009400">0000000000000000</span>  <span style="color:#808080"></span></div>
<div class="a m pre mc" style="left:0px;top:106.5px"><span style="color:#808080">00007FFC40F19350</span>  <span style="color:#009400">00007FFC40F193B8</span>  <span style="color:#808080">[stack]:00007FFC40F193B8</span></div>
<div class="a m pre mc" style="left:0px;top:121.5px"><span style="color:#808080">00007FFC40F19358</span>  <span style="color:#009400">68D6F0334346C200</span>  <span style="color:#808080"></span></div>
</div>
<div class="a" style="left:1253px;top:793px;width:1px;height:16px;background:#dcdcdc"></div>
<div class="a" style="left:1553px;top:793px;width:1px;height:16px;background:#dcdcdc"></div>
<div class="a" style="left:1720px;top:793px;width:1px;height:16px;background:#dcdcdc"></div>
<div class="a sc7" style="left:1202px;top:795px"><i style="transform:translateX(0.30px) scaleX(0.709);transform-origin:0 0">U</i><i style="transform:translateX(0.30px) scaleX(0.709);transform-origin:0 0">N</i><i style="transform:translateX(0.30px) scaleX(0.709);transform-origin:0 0">K</i><i style="transform:translateX(0.30px) scaleX(0.709);transform-origin:0 0">N</i><i style="transform:translateX(0.30px) scaleX(0.709);transform-origin:0 0">O</i><i style="transform:translateX(0.30px) scaleX(0.542);transform-origin:0 0">W</i><i style="transform:translateX(0.30px) scaleX(0.709);transform-origin:0 0">N</i></div>
<div class="a sc7" style="left:1258px;top:795px"><i>0</i><i>0</i><i>0</i><i>0</i><i>7</i><i style="transform:translateX(0.30px) scaleX(0.921);transform-origin:0 0">F</i><i style="transform:translateX(0.30px) scaleX(0.921);transform-origin:0 0">F</i><i style="transform:translateX(0.30px) scaleX(0.768);transform-origin:0 0">C</i><i>4</i><i>0</i><i style="transform:translateX(0.30px) scaleX(0.921);transform-origin:0 0">F</i><i>1</i><i>9</i><i>3</i><i>1</i><i>8</i><i>:</i><i>&nbsp;</i><i>[</i><i>s</i><i>t</i><i>a</i><i>c</i><i>k</i><i>]</i><i>:</i><i>0</i><i>0</i><i>0</i><i>0</i><i>7</i><i style="transform:translateX(0.30px) scaleX(0.921);transform-origin:0 0">F</i><i style="transform:translateX(0.30px) scaleX(0.921);transform-origin:0 0">F</i><i style="transform:translateX(0.30px) scaleX(0.768);transform-origin:0 0">C</i><i>4</i><i>0</i><i style="transform:translateX(0.30px) scaleX(0.921);transform-origin:0 0">F</i><i>1</i><i>9</i><i>3</i><i>1</i><i>8</i></div>
<div class="a sc7" style="left:1558px;top:795px"><i>(</i><i style="transform:translateX(0.30px) scaleX(0.921);transform-origin:0 0">S</i><i>y</i><i>n</i><i>c</i><i>h</i><i>r</i><i>o</i><i>n</i><i>i</i><i>z</i><i>e</i><i>d</i><i>&nbsp;</i><i style="transform:translateX(0.30px) scaleX(0.709);transform-origin:0 0">w</i><i>i</i><i>t</i><i>h</i><i>&nbsp;</i><i style="transform:translateX(0.30px) scaleX(0.768);transform-origin:0 0">R</i><i style="transform:translateX(0.30px) scaleX(0.921);transform-origin:0 0">S</i><i style="transform:translateX(0.30px) scaleX(0.921);transform-origin:0 0">P</i><i>)</i></div>
<div class="a" style="left:8px;top:816px;width:1920px;height:30px;background:#f0f0f0;border:1px solid #858b93"></div>
<svg class="a" style="left:13px;top:822px" width="14" height="16" viewBox="0 0 14 16"><defs><linearGradient id="otb" x1="0" x2="1"><stop offset="0" stop-color="#10a0a0"/><stop offset="0.3" stop-color="#30d0f0"/><stop offset="1" stop-color="#0010a0"/></linearGradient></defs><rect x="0.5" y="0.5" width="13" height="15" fill="#fff" stroke="#607080"/><rect x="0" y="0" width="14" height="3" fill="url(#otb)"/><rect x="2" y="4" width="10" height="10" fill="#e8f0ff"/><path d="M3 6.5h8M3 8.5h8M3 10.5h8M3 12.5h8" stroke="#606870" stroke-width="1"/></svg>
<div class="a sc" style="left:33px;top:824px"><i style="transform:translateX(0.30px) scaleX(0.575);transform-origin:0 0">O</i><i style="transform:translateX(0.30px) scaleX(0.831);transform-origin:0 0">u</i><i>t</i><i style="transform:translateX(0.30px) scaleX(0.831);transform-origin:0 0">p</i><i style="transform:translateX(0.30px) scaleX(0.831);transform-origin:0 0">u</i><i>t</i></div>
<svg class="a" style="left:1857px;top:827px" width="11" height="10" viewBox="0 0 11 10"><rect x="0.5" y="0.5" width="10" height="9" fill="none" stroke="#1a1a1a"/><rect x="0.5" y="0.5" width="10" height="2" fill="#1a1a1a"/></svg>
<svg class="a" style="left:1884px;top:827px" width="9" height="9" viewBox="0 0 9 9"><rect x="2.5" y="0.5" width="6" height="5" fill="none" stroke="#1a1a1a"/><rect x="2.5" y="0.5" width="6" height="1.5" fill="#1a1a1a"/><rect x="0.5" y="3.5" width="6" height="5" fill="#f0f0f0" stroke="#1a1a1a"/><rect x="0.5" y="3.5" width="6" height="1.5" fill="#1a1a1a"/></svg>
<svg class="a" style="left:1910px;top:827px" width="9" height="9" viewBox="0 0 9 9"><path d="M0.8 0.8L8.2 8.2M8.2 0.8L0.8 8.2" stroke="#1a1a1a" stroke-width="1.7"/></svg>
<div class="a" style="left:8px;top:848px;width:1920px;height:139px;background:#ffffff;border:1px solid #858b93"></div>
<div class="a" style="left:1910px;top:849px;width:17px;height:137px;background:#f0f0f0"></div>
<div class="a" style="left:1918px;top:951px;width:2px;height:18px;background:#808080;border-radius:1px"></div>
<div class="a" style="left:9px;top:849px;width:1900px;height:137px;overflow:hidden">
<div class="a m pre mc" style="left:6px;top:-11.5px;color:#000">This may lead to drastic lossgof information pn the oupout.</div>
<div class="a m pre mc" style="left:6px;top:3.5px;color:#000">If the segment is not read-only, please change the segment NAME.</div>
<div class="a m pre mc" style="left:6px;top:18.5px;color:#000"></div>
<div class="a m pre mc" style="left:6px;top:33.5px;color:#000">In general, the decompiler checks the segment permissions, class, and name</div>
<div class="a m pre mc" style="left:6px;top:48.5px;color:#000">to determine if it is read-only.</div>
<div class="a m pre mc" style="left:6px;top:63.5px;color:#000"> -&gt; OK</div>
<div class="a m pre mc" style="left:6px;top:78.5px;color:#000">7F68DB9BA000: loaded /home/mou/桌面/maze.so</div>
<div class="a m pre mc" style="left:6px;top:93.5px;color:#000">400000: loaded /usr/bin/python3.8</div>
<div class="a m pre mc" style="left:6px;top:108.5px;color:#000">7F68DC8F2000: loaded /usr/lib/x86_64-linux-gnu/ld-linux-x86-64.so.2</div>
<div class="a m pre mc" style="left:6px;top:123.5px;color:#000">Debugger: attached to process /usr/bin/python3.8 (pid=7670)</div>
</div>
<div class="a" style="left:10px;top:990px;width:45px;height:19px;background:#fdfdfd;border:1px solid #dcdcdc;border-radius:3px"></div>
<div class="a sc" style="left:15px;top:993px"><i style="transform:translateX(0.30px) scaleX(0.747);transform-origin:0 0">P</i><i style="transform:translateX(0.30px) scaleX(0.831);transform-origin:0 0">y</i><i>t</i><i style="transform:translateX(0.30px) scaleX(0.831);transform-origin:0 0">h</i><i style="transform:translateX(0.30px) scaleX(0.831);transform-origin:0 0">o</i><i style="transform:translateX(0.30px) scaleX(0.831);transform-origin:0 0">n</i></div>
<div class="a" style="left:61px;top:989px;width:1866px;height:21px;background:#ffffff;border-bottom:1px solid #a0a0a0;border-top:1px solid #f0f0f0"></div>
<div class="a sc7" style="left:10px;top:1016px"><i style="transform:translateX(0.30px) scaleX(0.709);transform-origin:0 0">A</i><i style="transform:translateX(0.30px) scaleX(0.709);transform-origin:0 0">U</i><i>:</i><i>&nbsp;</i><i>&nbsp;</i><i>i</i><i>d</i><i>l</i><i>e</i></div>
<div class="a" style="left:88px;top:1014px;width:1px;height:16px;background:#dcdcdc"></div>
<div class="a sc7" style="left:93px;top:1016px"><i style="transform:translateX(0.30px) scaleX(0.709);transform-origin:0 0">D</i><i>o</i><i style="transform:translateX(0.30px) scaleX(0.709);transform-origin:0 0">w</i><i>n</i></div>
<div class="a" style="left:164px;top:1014px;width:1px;height:16px;background:#dcdcdc"></div>
<div class="a sc7" style="left:169px;top:1016px"><i style="transform:translateX(0.30px) scaleX(0.709);transform-origin:0 0">D</i><i>i</i><i>s</i><i>k</i><i>:</i><i>&nbsp;</i><i>3</i><i>4</i><i style="transform:translateX(0.30px) scaleX(0.709);transform-origin:0 0">G</i><i style="transform:translateX(0.30px) scaleX(0.768);transform-origin:0 0">B</i></div>
<div class="a" style="left:240px;top:1014px;width:1px;height:16px;background:#dcdcdc"></div>
<div class="a" style="left:1192px;top:1036px;width:39px;height:4px;background:#f4dce4;border-radius:3px 3px 0 0"></div>
<div class="a" style="left:1368px;top:1036px;width:38px;height:4px;background:#b8b0c4;border-radius:3px 3px 0 0"></div>
<!-- /BOTTOM PANELS -->
</body></html>
